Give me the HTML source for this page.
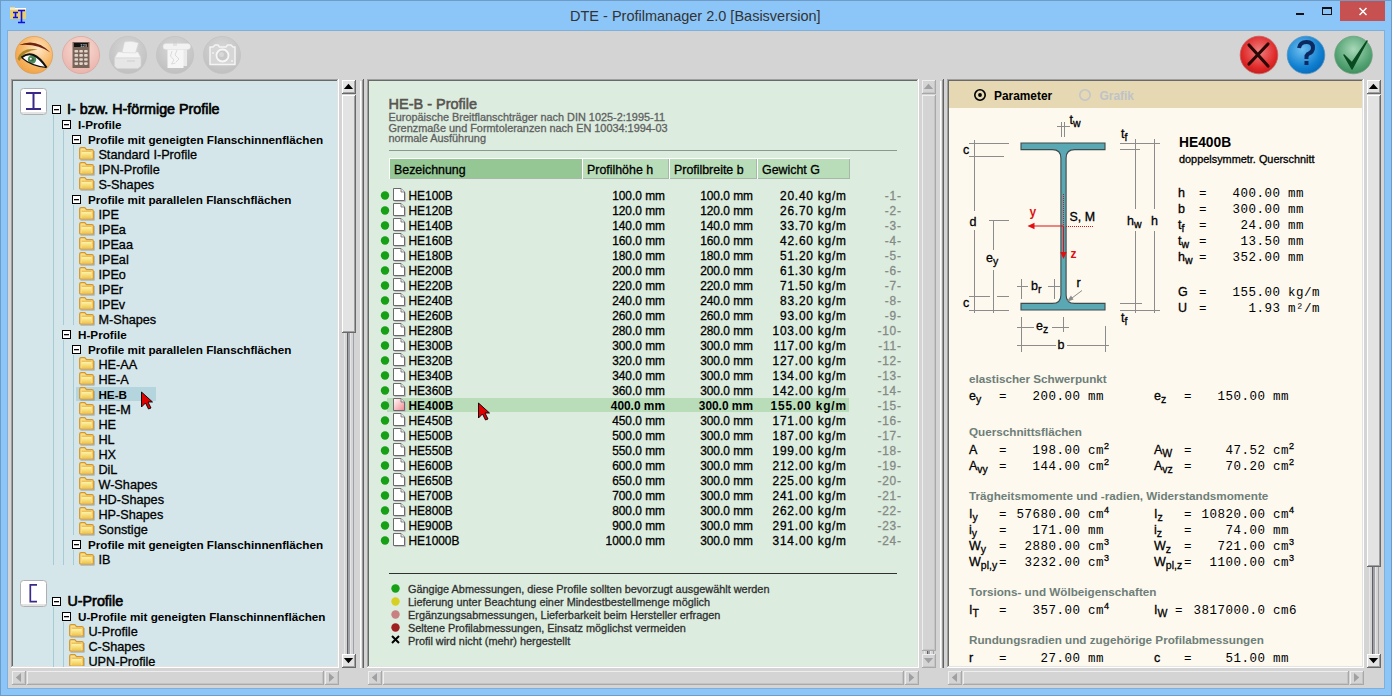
<!DOCTYPE html>
<html><head><meta charset="utf-8"><style>
html,body{margin:0;padding:0;width:1392px;height:696px;overflow:hidden;position:relative;font-family:"Liberation Sans",sans-serif;}
svg text{white-space:pre;}
</style></head><body>
<div style="position:absolute;left:0px;top:0px;width:1392px;height:696px;background:#8CC6F8;"></div><div style="position:absolute;left:0px;top:0px;width:1392px;height:1px;background:#6E9CC6;"></div><div style="position:absolute;left:0px;top:0px;width:1px;height:696px;background:#6E9CC6;"></div><div style="position:absolute;left:1391px;top:0px;width:1px;height:696px;background:#6E9CC6;"></div><div style="position:absolute;left:0px;top:695px;width:1392px;height:1px;background:#6E9CC6;"></div><div style="position:absolute;left:7px;top:30px;width:1378px;height:659px;background:#7FB0DC;"></div><div style="position:absolute;left:8px;top:31px;width:1376px;height:657px;background:#D4D4D4;"></div><div style="position:absolute;left:1340px;top:1px;width:45px;height:20px;background:#C75050;"></div><div style="position:absolute;left:1296px;top:13px;width:8px;height:2px;background:#111;"></div><div style="position:absolute;left:11px;top:79px;width:328px;height:589px;background:#fff;"></div><div style="position:absolute;left:11px;top:79px;width:327px;height:588px;background:#A0A0A0;"></div><div style="position:absolute;left:12px;top:80px;width:326px;height:587px;background:#E3E3E3;"></div><div style="position:absolute;left:12px;top:80px;width:325px;height:586px;background:#696969;"></div><div style="position:absolute;left:13px;top:81px;width:324px;height:585px;background:#D4E6EA;"></div><div style="position:absolute;left:367px;top:79px;width:552px;height:589px;background:#fff;"></div><div style="position:absolute;left:367px;top:79px;width:551px;height:588px;background:#A0A0A0;"></div><div style="position:absolute;left:368px;top:80px;width:550px;height:587px;background:#E3E3E3;"></div><div style="position:absolute;left:368px;top:80px;width:549px;height:586px;background:#696969;"></div><div style="position:absolute;left:369px;top:81px;width:548px;height:585px;background:#DCEDDF;"></div><div style="position:absolute;left:947px;top:79px;width:417px;height:589px;background:#fff;"></div><div style="position:absolute;left:947px;top:79px;width:416px;height:588px;background:#A0A0A0;"></div><div style="position:absolute;left:948px;top:80px;width:415px;height:587px;background:#E3E3E3;"></div><div style="position:absolute;left:948px;top:80px;width:414px;height:586px;background:#696969;"></div><div style="position:absolute;left:949px;top:81px;width:413px;height:585px;background:#FDF9EF;"></div><div style="position:absolute;left:949px;top:81px;width:413px;height:27px;background:#E5D8B2;"></div><div style="position:absolute;left:360px;top:81px;width:4px;height:587px;background:#fff;"></div><div style="position:absolute;left:361px;top:81px;width:3px;height:587px;background:#E3E3E3;"></div><div style="position:absolute;left:362px;top:80px;width:1px;height:588px;background:#9A9A9A;"></div><div style="position:absolute;left:363px;top:79px;width:1px;height:589px;background:#606060;"></div><div style="position:absolute;left:940px;top:81px;width:4px;height:587px;background:#fff;"></div><div style="position:absolute;left:941px;top:81px;width:3px;height:587px;background:#E3E3E3;"></div><div style="position:absolute;left:942px;top:80px;width:1px;height:588px;background:#9A9A9A;"></div><div style="position:absolute;left:943px;top:79px;width:1px;height:589px;background:#606060;"></div><div style="position:absolute;left:342px;top:95px;width:14px;height:559px;background:#D4D4D4;"></div><div style="position:absolute;left:344px;top:95px;width:1px;height:559px;background:#E6E6E6;"></div><div style="position:absolute;left:347px;top:95px;width:1px;height:559px;background:#606060;"></div><div style="position:absolute;left:348px;top:95px;width:2px;height:559px;background:#A0A0A8;"></div><div style="position:absolute;left:350px;top:95px;width:1px;height:559px;background:#E6E6E6;"></div><div style="position:absolute;left:353px;top:95px;width:1px;height:559px;background:#A0A0A8;"></div><div style="position:absolute;left:342px;top:80px;width:14px;height:14px;background:#696969;"></div><div style="position:absolute;left:342px;top:80px;width:13px;height:13px;background:#fff;"></div><div style="position:absolute;left:343px;top:81px;width:12px;height:12px;background:#A0A0A0;"></div><div style="position:absolute;left:343px;top:81px;width:11px;height:11px;background:#E3E3E3;"></div><div style="position:absolute;left:342px;top:95px;width:14px;height:238px;background:#696969;"></div><div style="position:absolute;left:342px;top:95px;width:13px;height:237px;background:#fff;"></div><div style="position:absolute;left:343px;top:96px;width:12px;height:236px;background:#A0A0A0;"></div><div style="position:absolute;left:343px;top:96px;width:11px;height:235px;background:#E3E3E3;"></div><div style="position:absolute;left:342px;top:654px;width:14px;height:14px;background:#696969;"></div><div style="position:absolute;left:342px;top:654px;width:13px;height:13px;background:#fff;"></div><div style="position:absolute;left:343px;top:655px;width:12px;height:12px;background:#A0A0A0;"></div><div style="position:absolute;left:343px;top:655px;width:11px;height:11px;background:#E3E3E3;"></div><div style="position:absolute;left:922px;top:95px;width:14px;height:559px;background:#D4D4D4;"></div><div style="position:absolute;left:924px;top:95px;width:1px;height:559px;background:#E6E6E6;"></div><div style="position:absolute;left:927px;top:95px;width:1px;height:559px;background:#606060;"></div><div style="position:absolute;left:928px;top:95px;width:2px;height:559px;background:#A0A0A8;"></div><div style="position:absolute;left:930px;top:95px;width:1px;height:559px;background:#E6E6E6;"></div><div style="position:absolute;left:933px;top:95px;width:1px;height:559px;background:#A0A0A8;"></div><div style="position:absolute;left:922px;top:80px;width:14px;height:14px;background:#A8A8A8;"></div><div style="position:absolute;left:922px;top:80px;width:13px;height:13px;background:#EEEEEE;"></div><div style="position:absolute;left:923px;top:81px;width:12px;height:12px;background:#C4C4C4;"></div><div style="position:absolute;left:923px;top:81px;width:11px;height:11px;background:#D4D4D4;"></div><div style="position:absolute;left:922px;top:95px;width:14px;height:556px;background:#A8A8A8;"></div><div style="position:absolute;left:922px;top:95px;width:13px;height:555px;background:#EEEEEE;"></div><div style="position:absolute;left:923px;top:96px;width:12px;height:554px;background:#C4C4C4;"></div><div style="position:absolute;left:923px;top:96px;width:11px;height:553px;background:#D4D4D4;"></div><div style="position:absolute;left:922px;top:654px;width:14px;height:14px;background:#A8A8A8;"></div><div style="position:absolute;left:922px;top:654px;width:13px;height:13px;background:#EEEEEE;"></div><div style="position:absolute;left:923px;top:655px;width:12px;height:12px;background:#C4C4C4;"></div><div style="position:absolute;left:923px;top:655px;width:11px;height:11px;background:#D4D4D4;"></div><div style="position:absolute;left:1367px;top:95px;width:14px;height:559px;background:#D4D4D4;"></div><div style="position:absolute;left:1369px;top:95px;width:1px;height:559px;background:#E6E6E6;"></div><div style="position:absolute;left:1372px;top:95px;width:1px;height:559px;background:#606060;"></div><div style="position:absolute;left:1373px;top:95px;width:2px;height:559px;background:#A0A0A8;"></div><div style="position:absolute;left:1375px;top:95px;width:1px;height:559px;background:#E6E6E6;"></div><div style="position:absolute;left:1378px;top:95px;width:1px;height:559px;background:#A0A0A8;"></div><div style="position:absolute;left:1367px;top:80px;width:14px;height:14px;background:#696969;"></div><div style="position:absolute;left:1367px;top:80px;width:13px;height:13px;background:#fff;"></div><div style="position:absolute;left:1368px;top:81px;width:12px;height:12px;background:#A0A0A0;"></div><div style="position:absolute;left:1368px;top:81px;width:11px;height:11px;background:#E3E3E3;"></div><div style="position:absolute;left:1367px;top:95px;width:14px;height:472px;background:#696969;"></div><div style="position:absolute;left:1367px;top:95px;width:13px;height:471px;background:#fff;"></div><div style="position:absolute;left:1368px;top:96px;width:12px;height:470px;background:#A0A0A0;"></div><div style="position:absolute;left:1368px;top:96px;width:11px;height:469px;background:#E3E3E3;"></div><div style="position:absolute;left:1367px;top:654px;width:14px;height:14px;background:#696969;"></div><div style="position:absolute;left:1367px;top:654px;width:13px;height:13px;background:#fff;"></div><div style="position:absolute;left:1368px;top:655px;width:12px;height:12px;background:#A0A0A0;"></div><div style="position:absolute;left:1368px;top:655px;width:11px;height:11px;background:#E3E3E3;"></div><div style="position:absolute;left:12px;top:671px;width:14px;height:14px;background:#A8A8A8;"></div><div style="position:absolute;left:12px;top:671px;width:13px;height:13px;background:#EEEEEE;"></div><div style="position:absolute;left:13px;top:672px;width:12px;height:12px;background:#C4C4C4;"></div><div style="position:absolute;left:13px;top:672px;width:11px;height:11px;background:#D4D4D4;"></div><div style="position:absolute;left:27px;top:671px;width:297px;height:14px;background:#A8A8A8;"></div><div style="position:absolute;left:27px;top:671px;width:296px;height:13px;background:#EEEEEE;"></div><div style="position:absolute;left:28px;top:672px;width:295px;height:12px;background:#C4C4C4;"></div><div style="position:absolute;left:28px;top:672px;width:294px;height:11px;background:#D4D4D4;"></div><div style="position:absolute;left:325px;top:671px;width:14px;height:14px;background:#A8A8A8;"></div><div style="position:absolute;left:325px;top:671px;width:13px;height:13px;background:#EEEEEE;"></div><div style="position:absolute;left:326px;top:672px;width:12px;height:12px;background:#C4C4C4;"></div><div style="position:absolute;left:326px;top:672px;width:11px;height:11px;background:#D4D4D4;"></div><div style="position:absolute;left:368px;top:671px;width:14px;height:14px;background:#A8A8A8;"></div><div style="position:absolute;left:368px;top:671px;width:13px;height:13px;background:#EEEEEE;"></div><div style="position:absolute;left:369px;top:672px;width:12px;height:12px;background:#C4C4C4;"></div><div style="position:absolute;left:369px;top:672px;width:11px;height:11px;background:#D4D4D4;"></div><div style="position:absolute;left:383px;top:671px;width:521px;height:14px;background:#A8A8A8;"></div><div style="position:absolute;left:383px;top:671px;width:520px;height:13px;background:#EEEEEE;"></div><div style="position:absolute;left:384px;top:672px;width:519px;height:12px;background:#C4C4C4;"></div><div style="position:absolute;left:384px;top:672px;width:518px;height:11px;background:#D4D4D4;"></div><div style="position:absolute;left:905px;top:671px;width:14px;height:14px;background:#A8A8A8;"></div><div style="position:absolute;left:905px;top:671px;width:13px;height:13px;background:#EEEEEE;"></div><div style="position:absolute;left:906px;top:672px;width:12px;height:12px;background:#C4C4C4;"></div><div style="position:absolute;left:906px;top:672px;width:11px;height:11px;background:#D4D4D4;"></div><div style="position:absolute;left:948px;top:671px;width:14px;height:14px;background:#A8A8A8;"></div><div style="position:absolute;left:948px;top:671px;width:13px;height:13px;background:#EEEEEE;"></div><div style="position:absolute;left:949px;top:672px;width:12px;height:12px;background:#C4C4C4;"></div><div style="position:absolute;left:949px;top:672px;width:11px;height:11px;background:#D4D4D4;"></div><div style="position:absolute;left:963px;top:671px;width:386px;height:14px;background:#A8A8A8;"></div><div style="position:absolute;left:963px;top:671px;width:385px;height:13px;background:#EEEEEE;"></div><div style="position:absolute;left:964px;top:672px;width:384px;height:12px;background:#C4C4C4;"></div><div style="position:absolute;left:964px;top:672px;width:383px;height:11px;background:#D4D4D4;"></div><div style="position:absolute;left:1350px;top:671px;width:14px;height:14px;background:#A8A8A8;"></div><div style="position:absolute;left:1350px;top:671px;width:13px;height:13px;background:#EEEEEE;"></div><div style="position:absolute;left:1351px;top:672px;width:12px;height:12px;background:#C4C4C4;"></div><div style="position:absolute;left:1351px;top:672px;width:11px;height:11px;background:#D4D4D4;"></div><div style="position:absolute;left:53px;top:115px;width:1px;height:450px;background:#A4CCD6;"></div><div style="position:absolute;left:63px;top:130px;width:1px;height:195px;background:#A4CCD6;"></div><div style="position:absolute;left:63px;top:340px;width:1px;height:225px;background:#A4CCD6;"></div><div style="position:absolute;left:73px;top:145px;width:1px;height:45px;background:#A4CCD6;"></div><div style="position:absolute;left:73px;top:205px;width:1px;height:120px;background:#A4CCD6;"></div><div style="position:absolute;left:73px;top:355px;width:1px;height:180px;background:#A4CCD6;"></div><div style="position:absolute;left:73px;top:550px;width:1px;height:15px;background:#A4CCD6;"></div><div style="position:absolute;left:76px;top:387px;width:80px;height:14px;background:#B4D4DE;"></div><div style="position:absolute;left:53px;top:607px;width:1px;height:60px;background:#A4CCD6;"></div><div style="position:absolute;left:63px;top:622px;width:1px;height:45px;background:#A4CCD6;"></div><div style="position:absolute;left:389px;top:150px;width:508px;height:1px;background:#8A9A8C;"></div><div style="position:absolute;left:389px;top:158px;width:193px;height:21px;background:#fff;"></div><div style="position:absolute;left:390px;top:159px;width:192px;height:20px;background:#A8B8A8;"></div><div style="position:absolute;left:390px;top:159px;width:191px;height:19px;background:#94C794;"></div><div style="position:absolute;left:582px;top:158px;width:87px;height:21px;background:#fff;"></div><div style="position:absolute;left:583px;top:159px;width:86px;height:20px;background:#A8B8A8;"></div><div style="position:absolute;left:583px;top:159px;width:85px;height:19px;background:#B8DDB8;"></div><div style="position:absolute;left:669px;top:158px;width:88px;height:21px;background:#fff;"></div><div style="position:absolute;left:670px;top:159px;width:87px;height:20px;background:#A8B8A8;"></div><div style="position:absolute;left:670px;top:159px;width:86px;height:19px;background:#B8DDB8;"></div><div style="position:absolute;left:757px;top:158px;width:93px;height:21px;background:#fff;"></div><div style="position:absolute;left:758px;top:159px;width:92px;height:20px;background:#A8B8A8;"></div><div style="position:absolute;left:758px;top:159px;width:91px;height:19px;background:#B8DDB8;"></div><div style="position:absolute;left:387px;top:398px;width:462px;height:14px;background:#B9DCB9;"></div><div style="position:absolute;left:389px;top:573px;width:508px;height:1px;background:#303030;"></div>
<svg width="1392" height="696" style="position:absolute;left:0;top:0">
<text x="570" y="21" font-size="14.5" font-weight="normal" fill="#333" text-anchor="start" font-family="Liberation Sans" >DTE - Profilmanager 2.0 [Basisversion]</text>
<path d="M1359.5 8 L1366.5 15 M1366.5 8 L1359.5 15" stroke="#fff" stroke-width="1.5"/>
<rect x="1322.5" y="7.5" width="9" height="7" fill="none" stroke="#111" stroke-width="1"/><rect x="1322" y="7" width="10" height="2" fill="#111"/>
<rect x="10" y="8" width="16" height="11" fill="#E8D070"/><rect x="10" y="8" width="16" height="1.5" fill="#fff"/><rect x="10" y="7" width="5" height="1.5" fill="#F0D890"/>
<path d="M13 12.5h5 M15.5 12.5v5 M13 17.5h5 M18 10.5h7 M21.5 10.5v12 M18 22.5h7" stroke="#1010E0" stroke-width="1.6" fill="none"/>
<path d="M343.9 89 L348.5 83.8 L353.1 89Z" fill="#000"/>
<path d="M343.9 658 L348.5 663.2 L353.1 658Z" fill="#000"/>
<path d="M923.9 89 L928.5 83.8 L933.1 89Z" fill="#A0A0A4"/>
<path d="M923.9 658 L928.5 663.2 L933.1 658Z" fill="#A0A0A4"/>
<path d="M1368.9 89 L1373.5 83.8 L1378.1 89Z" fill="#000"/>
<path d="M1368.9 658 L1373.5 663.2 L1378.1 658Z" fill="#000"/>
<path d="M21 672.9 L15.8 677.5 L21 682.1Z" fill="#A0A0A4"/>
<path d="M329 672.9 L334.2 677.5 L329 682.1Z" fill="#A0A0A4"/>
<path d="M377 672.9 L371.8 677.5 L377 682.1Z" fill="#A0A0A4"/>
<path d="M909 672.9 L914.2 677.5 L909 682.1Z" fill="#A0A0A4"/>
<path d="M957 672.9 L951.8 677.5 L957 682.1Z" fill="#A0A0A4"/>
<path d="M1354 672.9 L1359.2 677.5 L1354 682.1Z" fill="#A0A0A4"/>
<defs>
<radialGradient id="gOr" cx="0.6" cy="0.35" r="0.7"><stop offset="0" stop-color="#FFE8C8"/><stop offset="0.6" stop-color="#F8B868"/><stop offset="1" stop-color="#F0A040"/></radialGradient>
<radialGradient id="gPk" cx="0.5" cy="0.35" r="0.7"><stop offset="0" stop-color="#FBE0D8"/><stop offset="1" stop-color="#E8B0A8"/></radialGradient>
<radialGradient id="gGr" cx="0.5" cy="0.35" r="0.7"><stop offset="0" stop-color="#D8D8D8"/><stop offset="1" stop-color="#BEBEBE"/></radialGradient>
<radialGradient id="gRd" cx="0.5" cy="0.4" r="0.65"><stop offset="0" stop-color="#F08080"/><stop offset="0.7" stop-color="#E02828"/><stop offset="1" stop-color="#C01818"/></radialGradient>
<radialGradient id="gBl" cx="0.4" cy="0.35" r="0.7"><stop offset="0" stop-color="#70C0F0"/><stop offset="0.7" stop-color="#1080D0"/><stop offset="1" stop-color="#0868B8"/></radialGradient>
<radialGradient id="gGn" cx="0.5" cy="0.35" r="0.7"><stop offset="0" stop-color="#A8D8B8"/><stop offset="0.7" stop-color="#50A070"/><stop offset="1" stop-color="#388858"/></radialGradient>
<linearGradient id="gFold" x1="0" y1="0" x2="0" y2="1"><stop offset="0" stop-color="#FFF6B0"/><stop offset="1" stop-color="#F0C850"/></linearGradient>
<linearGradient id="gPink" x1="0" y1="0" x2="1" y2="1"><stop offset="0" stop-color="#FFFFFF"/><stop offset="1" stop-color="#F08890"/></linearGradient>
</defs>
<circle cx="34" cy="55" r="18.6" fill="url(#gOr)" stroke="#D8A060" stroke-width="0.8"/>
<path d="M19 45 Q36 37.5 50.5 52.5 Q37 43 19 45Z" fill="#6E2410"/>
<path d="M17.5 59 Q21 47 38 49.5 Q24 50 19.5 61Z" fill="#A88628"/>
<path d="M21.5 57.5 Q33 48 46.5 67.5 Q31 66 21.5 57.5Z" fill="#fff"/>
<circle cx="32" cy="59.5" r="4.2" fill="#4E8E5C"/><circle cx="32" cy="59.5" r="2" fill="#3A6E46"/><circle cx="30.8" cy="58.8" r="1" fill="#fff"/>
<path d="M21.5 57.5 Q33 47.5 46.5 67.5" fill="none" stroke="#111" stroke-width="2"/><path d="M21.5 57.5 Q31 66 46.5 67.5" fill="none" stroke="#111" stroke-width="1.1"/>
<circle cx="81" cy="55" r="18.6" fill="url(#gPk)" stroke="#D8A8A0" stroke-width="0.8"/>
<rect x="72.5" y="42" width="17" height="26" fill="#7A6458"/><rect x="74" y="43" width="14" height="4" fill="#111"/><text x="87" y="46.6" font-size="4" fill="#fff" text-anchor="end" font-family="Liberation Sans">123</text>
<rect x="74.5" y="50.0" width="3.6" height="2.6" rx="0.8" fill="#E0D4CC"/>
<rect x="79.3" y="50.0" width="3.6" height="2.6" rx="0.8" fill="#E0D4CC"/>
<rect x="84.1" y="50.0" width="3.6" height="2.6" rx="0.8" fill="#E0D4CC"/>
<rect x="74.5" y="54.1" width="3.6" height="2.6" rx="0.8" fill="#E0D4CC"/>
<rect x="79.3" y="54.1" width="3.6" height="2.6" rx="0.8" fill="#E0D4CC"/>
<rect x="84.1" y="54.1" width="3.6" height="2.6" rx="0.8" fill="#E0D4CC"/>
<rect x="74.5" y="58.2" width="3.6" height="2.6" rx="0.8" fill="#E0D4CC"/>
<rect x="79.3" y="58.2" width="3.6" height="2.6" rx="0.8" fill="#E0D4CC"/>
<rect x="84.1" y="58.2" width="3.6" height="2.6" rx="0.8" fill="#E0D4CC"/>
<rect x="74.5" y="62.3" width="3.6" height="2.6" rx="0.8" fill="#E0D4CC"/>
<rect x="79.3" y="62.3" width="3.6" height="2.6" rx="0.8" fill="#E0D4CC"/>
<rect x="84.1" y="62.3" width="3.6" height="2.6" rx="0.8" fill="#E0D4CC"/>
<circle cx="128" cy="55" r="18.6" fill="url(#gGr)" stroke="#C4C4C4" stroke-width="0.8"/>
<path d="M114.5 58 L118 52 H138 L141 58Z" fill="#F4F4F4" stroke="#DADADA" stroke-width="0.6"/><path d="M114.5 58 H141 V66 L138 68.5 H117 L114.5 66Z" fill="#E6E6E6" stroke="#D4D4D4" stroke-width="0.6"/><path d="M122 52.5 L124.5 42 Q131 40 138.5 43 L135.5 53Z" fill="#F2F2F2" stroke="#D6D6D6" stroke-width="0.6"/><path d="M127 61 h8" stroke="#C8C8C8" stroke-width="0.8"/>
<circle cx="175" cy="55" r="18.6" fill="url(#gGr)" stroke="#C4C4C4" stroke-width="0.8"/>
<rect x="170" y="46" width="17" height="20" fill="#EAEAEA"/><path d="M167.5 46 H183.5 V68 H167.5Z" fill="#F6F6F6"/><rect x="163" y="43.5" width="27.5" height="6" rx="3" fill="#F2F2F2" stroke="#DCDCDC" stroke-width="0.5"/><path d="M174 40 V46 M176 40 V46" stroke="#C8C8C8" stroke-width="0.7"/><path d="M172 51 L170.5 56 L174 60 L171.5 64 L175.5 63 M177 50 L175 55 L179 59 L176 62" stroke="#D0D0D0" fill="none" stroke-width="0.7"/>
<circle cx="222" cy="55" r="18.6" fill="url(#gGr)" stroke="#C4C4C4" stroke-width="0.8"/>
<path d="M210 47 H213 L215 45 H218 L219.5 47 H226 L227.5 45 H231 L233 47 H235 V64.5 H210Z" fill="#D6D6D6" stroke="#F4F4F4" stroke-width="1.5" stroke-linejoin="round"/><circle cx="222.5" cy="55.5" r="6" fill="#C8C8C8" stroke="#F6F6F6" stroke-width="1.8"/><circle cx="221.5" cy="54.5" r="2.5" fill="#D8D8D8"/><circle cx="213" cy="53" r="1" fill="#F0F0F0"/><circle cx="232" cy="61" r="1" fill="#F0F0F0"/>
<circle cx="1259" cy="55" r="18.8" fill="url(#gRd)" stroke="#C06060" stroke-width="0.8"/>
<path d="M1249 45 L1268 66 M1268 44 L1249 64" stroke="#2A0808" stroke-width="3.2" stroke-linecap="round"/>
<circle cx="1306" cy="55" r="18.8" fill="url(#gBl)" stroke="#5090C0" stroke-width="0.8"/>
<path d="M1299 48 Q1300 42 1306.5 42 Q1313 42 1313 48 Q1313 52 1308 54 L1306.5 56 V59" stroke="#0C2A60" stroke-width="4" fill="none"/><rect x="1304.5" y="61" width="4" height="4" fill="#0C2A60"/>
<circle cx="1353.5" cy="55" r="18.8" fill="url(#gGn)" stroke="#70A080" stroke-width="0.8"/>
<path d="M1344 55 L1352 69 L1367 41 L1352 63Z" fill="#0A4A20" stroke="#0A4A20" stroke-width="1.5" stroke-linejoin="round"/>
<defs><clipPath id="cL"><rect x="13" y="81" width="325" height="585"/></clipPath><clipPath id="cM"><rect x="369" y="81" width="549" height="585"/></clipPath><clipPath id="cR"><rect x="949" y="81" width="413" height="585"/></clipPath></defs>
<g clip-path="url(#cL)">
<rect x="20.5" y="88.5" width="26" height="26" rx="3" fill="#fff" stroke="#B0B0B0" stroke-width="1"/>
<rect x="21" y="112" width="26" height="2" fill="#C8C8C8" opacity="0.5"/>
<path d="M26 93 H41 M33.5 93 V109 M26 109 H41" stroke="#3A2A88" stroke-width="2" fill="none"/>
<rect x="52.5" y="105.5" width="8" height="8" fill="#fff" stroke="#000" stroke-width="1"/><rect x="54" y="109" width="5" height="1.3" fill="#000"/>
<text x="67" y="114" font-size="14.3" font-weight="normal" fill="#000" text-anchor="start" font-family="Liberation Sans" stroke="#000" stroke-width="0.65" >I- bzw. H-förmige Profile</text>
<rect x="62.5" y="120.5" width="8" height="8" fill="#fff" stroke="#000" stroke-width="1"/><rect x="64.0" y="124" width="5" height="1.3" fill="#000"/>
<text x="78.0" y="129" font-size="11.7" font-weight="bold" fill="#000" text-anchor="start" font-family="Liberation Sans" >I-Profile</text>
<rect x="72.5" y="135.5" width="8" height="8" fill="#fff" stroke="#000" stroke-width="1"/><rect x="74.0" y="139" width="5" height="1.3" fill="#000"/>
<text x="88.0" y="144" font-size="11.7" font-weight="bold" fill="#000" text-anchor="start" font-family="Liberation Sans" >Profile mit geneigten Flanschinnenflächen</text>
<g transform="translate(79.0,147)"><path d="M1.5 13 H15 V4" stroke="#6A5A40" stroke-width="1.1" fill="none" opacity="0.5"/><path d="M0.7 2 Q0.7 0.7 2 0.7 H5.8 L7.5 2.6 H13 Q14.3 2.6 14.3 4 V11 Q14.3 12 13.3 12 H1.7 Q0.7 12 0.7 11Z" fill="#FBE08A" stroke="#D4962A" stroke-width="1.2"/><rect x="2.6" y="4.6" width="9.8" height="6.4" fill="url(#gFold)"/><path d="M2.6 4.2 H12.6" stroke="#E3A83A" stroke-width="0.9"/></g>
<text x="98.4" y="159" font-size="12.7" font-weight="normal" fill="#000" text-anchor="start" font-family="Liberation Sans" stroke="#000" stroke-width="0.3" >Standard I-Profile</text>
<g transform="translate(79.0,162)"><path d="M1.5 13 H15 V4" stroke="#6A5A40" stroke-width="1.1" fill="none" opacity="0.5"/><path d="M0.7 2 Q0.7 0.7 2 0.7 H5.8 L7.5 2.6 H13 Q14.3 2.6 14.3 4 V11 Q14.3 12 13.3 12 H1.7 Q0.7 12 0.7 11Z" fill="#FBE08A" stroke="#D4962A" stroke-width="1.2"/><rect x="2.6" y="4.6" width="9.8" height="6.4" fill="url(#gFold)"/><path d="M2.6 4.2 H12.6" stroke="#E3A83A" stroke-width="0.9"/></g>
<text x="98.4" y="174" font-size="12.7" font-weight="normal" fill="#000" text-anchor="start" font-family="Liberation Sans" stroke="#000" stroke-width="0.3" >IPN-Profile</text>
<g transform="translate(79.0,177)"><path d="M1.5 13 H15 V4" stroke="#6A5A40" stroke-width="1.1" fill="none" opacity="0.5"/><path d="M0.7 2 Q0.7 0.7 2 0.7 H5.8 L7.5 2.6 H13 Q14.3 2.6 14.3 4 V11 Q14.3 12 13.3 12 H1.7 Q0.7 12 0.7 11Z" fill="#FBE08A" stroke="#D4962A" stroke-width="1.2"/><rect x="2.6" y="4.6" width="9.8" height="6.4" fill="url(#gFold)"/><path d="M2.6 4.2 H12.6" stroke="#E3A83A" stroke-width="0.9"/></g>
<text x="98.4" y="189" font-size="12.7" font-weight="normal" fill="#000" text-anchor="start" font-family="Liberation Sans" stroke="#000" stroke-width="0.3" >S-Shapes</text>
<rect x="72.5" y="195.5" width="8" height="8" fill="#fff" stroke="#000" stroke-width="1"/><rect x="74.0" y="199" width="5" height="1.3" fill="#000"/>
<text x="88.0" y="204" font-size="11.7" font-weight="bold" fill="#000" text-anchor="start" font-family="Liberation Sans" >Profile mit parallelen Flanschflächen</text>
<g transform="translate(79.0,207)"><path d="M1.5 13 H15 V4" stroke="#6A5A40" stroke-width="1.1" fill="none" opacity="0.5"/><path d="M0.7 2 Q0.7 0.7 2 0.7 H5.8 L7.5 2.6 H13 Q14.3 2.6 14.3 4 V11 Q14.3 12 13.3 12 H1.7 Q0.7 12 0.7 11Z" fill="#FBE08A" stroke="#D4962A" stroke-width="1.2"/><rect x="2.6" y="4.6" width="9.8" height="6.4" fill="url(#gFold)"/><path d="M2.6 4.2 H12.6" stroke="#E3A83A" stroke-width="0.9"/></g>
<text x="98.4" y="219" font-size="12.7" font-weight="normal" fill="#000" text-anchor="start" font-family="Liberation Sans" stroke="#000" stroke-width="0.3" >IPE</text>
<g transform="translate(79.0,222)"><path d="M1.5 13 H15 V4" stroke="#6A5A40" stroke-width="1.1" fill="none" opacity="0.5"/><path d="M0.7 2 Q0.7 0.7 2 0.7 H5.8 L7.5 2.6 H13 Q14.3 2.6 14.3 4 V11 Q14.3 12 13.3 12 H1.7 Q0.7 12 0.7 11Z" fill="#FBE08A" stroke="#D4962A" stroke-width="1.2"/><rect x="2.6" y="4.6" width="9.8" height="6.4" fill="url(#gFold)"/><path d="M2.6 4.2 H12.6" stroke="#E3A83A" stroke-width="0.9"/></g>
<text x="98.4" y="234" font-size="12.7" font-weight="normal" fill="#000" text-anchor="start" font-family="Liberation Sans" stroke="#000" stroke-width="0.3" >IPEa</text>
<g transform="translate(79.0,237)"><path d="M1.5 13 H15 V4" stroke="#6A5A40" stroke-width="1.1" fill="none" opacity="0.5"/><path d="M0.7 2 Q0.7 0.7 2 0.7 H5.8 L7.5 2.6 H13 Q14.3 2.6 14.3 4 V11 Q14.3 12 13.3 12 H1.7 Q0.7 12 0.7 11Z" fill="#FBE08A" stroke="#D4962A" stroke-width="1.2"/><rect x="2.6" y="4.6" width="9.8" height="6.4" fill="url(#gFold)"/><path d="M2.6 4.2 H12.6" stroke="#E3A83A" stroke-width="0.9"/></g>
<text x="98.4" y="249" font-size="12.7" font-weight="normal" fill="#000" text-anchor="start" font-family="Liberation Sans" stroke="#000" stroke-width="0.3" >IPEaa</text>
<g transform="translate(79.0,252)"><path d="M1.5 13 H15 V4" stroke="#6A5A40" stroke-width="1.1" fill="none" opacity="0.5"/><path d="M0.7 2 Q0.7 0.7 2 0.7 H5.8 L7.5 2.6 H13 Q14.3 2.6 14.3 4 V11 Q14.3 12 13.3 12 H1.7 Q0.7 12 0.7 11Z" fill="#FBE08A" stroke="#D4962A" stroke-width="1.2"/><rect x="2.6" y="4.6" width="9.8" height="6.4" fill="url(#gFold)"/><path d="M2.6 4.2 H12.6" stroke="#E3A83A" stroke-width="0.9"/></g>
<text x="98.4" y="264" font-size="12.7" font-weight="normal" fill="#000" text-anchor="start" font-family="Liberation Sans" stroke="#000" stroke-width="0.3" >IPEal</text>
<g transform="translate(79.0,267)"><path d="M1.5 13 H15 V4" stroke="#6A5A40" stroke-width="1.1" fill="none" opacity="0.5"/><path d="M0.7 2 Q0.7 0.7 2 0.7 H5.8 L7.5 2.6 H13 Q14.3 2.6 14.3 4 V11 Q14.3 12 13.3 12 H1.7 Q0.7 12 0.7 11Z" fill="#FBE08A" stroke="#D4962A" stroke-width="1.2"/><rect x="2.6" y="4.6" width="9.8" height="6.4" fill="url(#gFold)"/><path d="M2.6 4.2 H12.6" stroke="#E3A83A" stroke-width="0.9"/></g>
<text x="98.4" y="279" font-size="12.7" font-weight="normal" fill="#000" text-anchor="start" font-family="Liberation Sans" stroke="#000" stroke-width="0.3" >IPEo</text>
<g transform="translate(79.0,282)"><path d="M1.5 13 H15 V4" stroke="#6A5A40" stroke-width="1.1" fill="none" opacity="0.5"/><path d="M0.7 2 Q0.7 0.7 2 0.7 H5.8 L7.5 2.6 H13 Q14.3 2.6 14.3 4 V11 Q14.3 12 13.3 12 H1.7 Q0.7 12 0.7 11Z" fill="#FBE08A" stroke="#D4962A" stroke-width="1.2"/><rect x="2.6" y="4.6" width="9.8" height="6.4" fill="url(#gFold)"/><path d="M2.6 4.2 H12.6" stroke="#E3A83A" stroke-width="0.9"/></g>
<text x="98.4" y="294" font-size="12.7" font-weight="normal" fill="#000" text-anchor="start" font-family="Liberation Sans" stroke="#000" stroke-width="0.3" >IPEr</text>
<g transform="translate(79.0,297)"><path d="M1.5 13 H15 V4" stroke="#6A5A40" stroke-width="1.1" fill="none" opacity="0.5"/><path d="M0.7 2 Q0.7 0.7 2 0.7 H5.8 L7.5 2.6 H13 Q14.3 2.6 14.3 4 V11 Q14.3 12 13.3 12 H1.7 Q0.7 12 0.7 11Z" fill="#FBE08A" stroke="#D4962A" stroke-width="1.2"/><rect x="2.6" y="4.6" width="9.8" height="6.4" fill="url(#gFold)"/><path d="M2.6 4.2 H12.6" stroke="#E3A83A" stroke-width="0.9"/></g>
<text x="98.4" y="309" font-size="12.7" font-weight="normal" fill="#000" text-anchor="start" font-family="Liberation Sans" stroke="#000" stroke-width="0.3" >IPEv</text>
<g transform="translate(79.0,312)"><path d="M1.5 13 H15 V4" stroke="#6A5A40" stroke-width="1.1" fill="none" opacity="0.5"/><path d="M0.7 2 Q0.7 0.7 2 0.7 H5.8 L7.5 2.6 H13 Q14.3 2.6 14.3 4 V11 Q14.3 12 13.3 12 H1.7 Q0.7 12 0.7 11Z" fill="#FBE08A" stroke="#D4962A" stroke-width="1.2"/><rect x="2.6" y="4.6" width="9.8" height="6.4" fill="url(#gFold)"/><path d="M2.6 4.2 H12.6" stroke="#E3A83A" stroke-width="0.9"/></g>
<text x="98.4" y="324" font-size="12.7" font-weight="normal" fill="#000" text-anchor="start" font-family="Liberation Sans" stroke="#000" stroke-width="0.3" >M-Shapes</text>
<rect x="62.5" y="330.5" width="8" height="8" fill="#fff" stroke="#000" stroke-width="1"/><rect x="64.0" y="334" width="5" height="1.3" fill="#000"/>
<text x="78.0" y="339" font-size="11.7" font-weight="bold" fill="#000" text-anchor="start" font-family="Liberation Sans" >H-Profile</text>
<rect x="72.5" y="345.5" width="8" height="8" fill="#fff" stroke="#000" stroke-width="1"/><rect x="74.0" y="349" width="5" height="1.3" fill="#000"/>
<text x="88.0" y="354" font-size="11.7" font-weight="bold" fill="#000" text-anchor="start" font-family="Liberation Sans" >Profile mit parallelen Flanschflächen</text>
<g transform="translate(79.0,357)"><path d="M1.5 13 H15 V4" stroke="#6A5A40" stroke-width="1.1" fill="none" opacity="0.5"/><path d="M0.7 2 Q0.7 0.7 2 0.7 H5.8 L7.5 2.6 H13 Q14.3 2.6 14.3 4 V11 Q14.3 12 13.3 12 H1.7 Q0.7 12 0.7 11Z" fill="#FBE08A" stroke="#D4962A" stroke-width="1.2"/><rect x="2.6" y="4.6" width="9.8" height="6.4" fill="url(#gFold)"/><path d="M2.6 4.2 H12.6" stroke="#E3A83A" stroke-width="0.9"/></g>
<text x="98.4" y="369" font-size="12.7" font-weight="normal" fill="#000" text-anchor="start" font-family="Liberation Sans" stroke="#000" stroke-width="0.3" >HE-AA</text>
<g transform="translate(79.0,372)"><path d="M1.5 13 H15 V4" stroke="#6A5A40" stroke-width="1.1" fill="none" opacity="0.5"/><path d="M0.7 2 Q0.7 0.7 2 0.7 H5.8 L7.5 2.6 H13 Q14.3 2.6 14.3 4 V11 Q14.3 12 13.3 12 H1.7 Q0.7 12 0.7 11Z" fill="#FBE08A" stroke="#D4962A" stroke-width="1.2"/><rect x="2.6" y="4.6" width="9.8" height="6.4" fill="url(#gFold)"/><path d="M2.6 4.2 H12.6" stroke="#E3A83A" stroke-width="0.9"/></g>
<text x="98.4" y="384" font-size="12.7" font-weight="normal" fill="#000" text-anchor="start" font-family="Liberation Sans" stroke="#000" stroke-width="0.3" >HE-A</text>
<g transform="translate(79.0,387)"><path d="M1.5 13 H15 V4" stroke="#6A5A40" stroke-width="1.1" fill="none" opacity="0.5"/><path d="M0.7 2 Q0.7 0.7 2 0.7 H5.8 L7.5 2.6 H13 Q14.3 2.6 14.3 4 V11 Q14.3 12 13.3 12 H1.7 Q0.7 12 0.7 11Z" fill="#FBE08A" stroke="#D4962A" stroke-width="1.2"/><rect x="2.6" y="4.6" width="9.8" height="6.4" fill="url(#gFold)"/><path d="M2.6 4.2 H12.6" stroke="#E3A83A" stroke-width="0.9"/></g>
<text x="98.4" y="399" font-size="11.7" font-weight="bold" fill="#000" text-anchor="start" font-family="Liberation Sans" >HE-B</text>
<g transform="translate(79.0,402)"><path d="M1.5 13 H15 V4" stroke="#6A5A40" stroke-width="1.1" fill="none" opacity="0.5"/><path d="M0.7 2 Q0.7 0.7 2 0.7 H5.8 L7.5 2.6 H13 Q14.3 2.6 14.3 4 V11 Q14.3 12 13.3 12 H1.7 Q0.7 12 0.7 11Z" fill="#FBE08A" stroke="#D4962A" stroke-width="1.2"/><rect x="2.6" y="4.6" width="9.8" height="6.4" fill="url(#gFold)"/><path d="M2.6 4.2 H12.6" stroke="#E3A83A" stroke-width="0.9"/></g>
<text x="98.4" y="414" font-size="12.7" font-weight="normal" fill="#000" text-anchor="start" font-family="Liberation Sans" stroke="#000" stroke-width="0.3" >HE-M</text>
<g transform="translate(79.0,417)"><path d="M1.5 13 H15 V4" stroke="#6A5A40" stroke-width="1.1" fill="none" opacity="0.5"/><path d="M0.7 2 Q0.7 0.7 2 0.7 H5.8 L7.5 2.6 H13 Q14.3 2.6 14.3 4 V11 Q14.3 12 13.3 12 H1.7 Q0.7 12 0.7 11Z" fill="#FBE08A" stroke="#D4962A" stroke-width="1.2"/><rect x="2.6" y="4.6" width="9.8" height="6.4" fill="url(#gFold)"/><path d="M2.6 4.2 H12.6" stroke="#E3A83A" stroke-width="0.9"/></g>
<text x="98.4" y="429" font-size="12.7" font-weight="normal" fill="#000" text-anchor="start" font-family="Liberation Sans" stroke="#000" stroke-width="0.3" >HE</text>
<g transform="translate(79.0,432)"><path d="M1.5 13 H15 V4" stroke="#6A5A40" stroke-width="1.1" fill="none" opacity="0.5"/><path d="M0.7 2 Q0.7 0.7 2 0.7 H5.8 L7.5 2.6 H13 Q14.3 2.6 14.3 4 V11 Q14.3 12 13.3 12 H1.7 Q0.7 12 0.7 11Z" fill="#FBE08A" stroke="#D4962A" stroke-width="1.2"/><rect x="2.6" y="4.6" width="9.8" height="6.4" fill="url(#gFold)"/><path d="M2.6 4.2 H12.6" stroke="#E3A83A" stroke-width="0.9"/></g>
<text x="98.4" y="444" font-size="12.7" font-weight="normal" fill="#000" text-anchor="start" font-family="Liberation Sans" stroke="#000" stroke-width="0.3" >HL</text>
<g transform="translate(79.0,447)"><path d="M1.5 13 H15 V4" stroke="#6A5A40" stroke-width="1.1" fill="none" opacity="0.5"/><path d="M0.7 2 Q0.7 0.7 2 0.7 H5.8 L7.5 2.6 H13 Q14.3 2.6 14.3 4 V11 Q14.3 12 13.3 12 H1.7 Q0.7 12 0.7 11Z" fill="#FBE08A" stroke="#D4962A" stroke-width="1.2"/><rect x="2.6" y="4.6" width="9.8" height="6.4" fill="url(#gFold)"/><path d="M2.6 4.2 H12.6" stroke="#E3A83A" stroke-width="0.9"/></g>
<text x="98.4" y="459" font-size="12.7" font-weight="normal" fill="#000" text-anchor="start" font-family="Liberation Sans" stroke="#000" stroke-width="0.3" >HX</text>
<g transform="translate(79.0,462)"><path d="M1.5 13 H15 V4" stroke="#6A5A40" stroke-width="1.1" fill="none" opacity="0.5"/><path d="M0.7 2 Q0.7 0.7 2 0.7 H5.8 L7.5 2.6 H13 Q14.3 2.6 14.3 4 V11 Q14.3 12 13.3 12 H1.7 Q0.7 12 0.7 11Z" fill="#FBE08A" stroke="#D4962A" stroke-width="1.2"/><rect x="2.6" y="4.6" width="9.8" height="6.4" fill="url(#gFold)"/><path d="M2.6 4.2 H12.6" stroke="#E3A83A" stroke-width="0.9"/></g>
<text x="98.4" y="474" font-size="12.7" font-weight="normal" fill="#000" text-anchor="start" font-family="Liberation Sans" stroke="#000" stroke-width="0.3" >DiL</text>
<g transform="translate(79.0,477)"><path d="M1.5 13 H15 V4" stroke="#6A5A40" stroke-width="1.1" fill="none" opacity="0.5"/><path d="M0.7 2 Q0.7 0.7 2 0.7 H5.8 L7.5 2.6 H13 Q14.3 2.6 14.3 4 V11 Q14.3 12 13.3 12 H1.7 Q0.7 12 0.7 11Z" fill="#FBE08A" stroke="#D4962A" stroke-width="1.2"/><rect x="2.6" y="4.6" width="9.8" height="6.4" fill="url(#gFold)"/><path d="M2.6 4.2 H12.6" stroke="#E3A83A" stroke-width="0.9"/></g>
<text x="98.4" y="489" font-size="12.7" font-weight="normal" fill="#000" text-anchor="start" font-family="Liberation Sans" stroke="#000" stroke-width="0.3" >W-Shapes</text>
<g transform="translate(79.0,492)"><path d="M1.5 13 H15 V4" stroke="#6A5A40" stroke-width="1.1" fill="none" opacity="0.5"/><path d="M0.7 2 Q0.7 0.7 2 0.7 H5.8 L7.5 2.6 H13 Q14.3 2.6 14.3 4 V11 Q14.3 12 13.3 12 H1.7 Q0.7 12 0.7 11Z" fill="#FBE08A" stroke="#D4962A" stroke-width="1.2"/><rect x="2.6" y="4.6" width="9.8" height="6.4" fill="url(#gFold)"/><path d="M2.6 4.2 H12.6" stroke="#E3A83A" stroke-width="0.9"/></g>
<text x="98.4" y="504" font-size="12.7" font-weight="normal" fill="#000" text-anchor="start" font-family="Liberation Sans" stroke="#000" stroke-width="0.3" >HD-Shapes</text>
<g transform="translate(79.0,507)"><path d="M1.5 13 H15 V4" stroke="#6A5A40" stroke-width="1.1" fill="none" opacity="0.5"/><path d="M0.7 2 Q0.7 0.7 2 0.7 H5.8 L7.5 2.6 H13 Q14.3 2.6 14.3 4 V11 Q14.3 12 13.3 12 H1.7 Q0.7 12 0.7 11Z" fill="#FBE08A" stroke="#D4962A" stroke-width="1.2"/><rect x="2.6" y="4.6" width="9.8" height="6.4" fill="url(#gFold)"/><path d="M2.6 4.2 H12.6" stroke="#E3A83A" stroke-width="0.9"/></g>
<text x="98.4" y="519" font-size="12.7" font-weight="normal" fill="#000" text-anchor="start" font-family="Liberation Sans" stroke="#000" stroke-width="0.3" >HP-Shapes</text>
<g transform="translate(79.0,522)"><path d="M1.5 13 H15 V4" stroke="#6A5A40" stroke-width="1.1" fill="none" opacity="0.5"/><path d="M0.7 2 Q0.7 0.7 2 0.7 H5.8 L7.5 2.6 H13 Q14.3 2.6 14.3 4 V11 Q14.3 12 13.3 12 H1.7 Q0.7 12 0.7 11Z" fill="#FBE08A" stroke="#D4962A" stroke-width="1.2"/><rect x="2.6" y="4.6" width="9.8" height="6.4" fill="url(#gFold)"/><path d="M2.6 4.2 H12.6" stroke="#E3A83A" stroke-width="0.9"/></g>
<text x="98.4" y="534" font-size="12.7" font-weight="normal" fill="#000" text-anchor="start" font-family="Liberation Sans" stroke="#000" stroke-width="0.3" >Sonstige</text>
<rect x="72.5" y="540.5" width="8" height="8" fill="#fff" stroke="#000" stroke-width="1"/><rect x="74.0" y="544" width="5" height="1.3" fill="#000"/>
<text x="88.0" y="549" font-size="11.7" font-weight="bold" fill="#000" text-anchor="start" font-family="Liberation Sans" >Profile mit geneigten Flanschinnenflächen</text>
<g transform="translate(79.0,552)"><path d="M1.5 13 H15 V4" stroke="#6A5A40" stroke-width="1.1" fill="none" opacity="0.5"/><path d="M0.7 2 Q0.7 0.7 2 0.7 H5.8 L7.5 2.6 H13 Q14.3 2.6 14.3 4 V11 Q14.3 12 13.3 12 H1.7 Q0.7 12 0.7 11Z" fill="#FBE08A" stroke="#D4962A" stroke-width="1.2"/><rect x="2.6" y="4.6" width="9.8" height="6.4" fill="url(#gFold)"/><path d="M2.6 4.2 H12.6" stroke="#E3A83A" stroke-width="0.9"/></g>
<text x="98.4" y="564" font-size="12.7" font-weight="normal" fill="#000" text-anchor="start" font-family="Liberation Sans" stroke="#000" stroke-width="0.3" >IB</text>
<rect x="20.5" y="580.5" width="26" height="26" rx="3" fill="#fff" stroke="#B0B0B0" stroke-width="1"/>
<rect x="21" y="604" width="26" height="2" fill="#C8C8C8" opacity="0.5"/>
<path d="M37 584.8 H30.3 V601.7 H37" stroke="#3A2A88" stroke-width="1.7" fill="none"/>
<rect x="52.5" y="597.5" width="8" height="8" fill="#fff" stroke="#000" stroke-width="1"/><rect x="54" y="601" width="5" height="1.3" fill="#000"/>
<text x="67.5" y="606" font-size="14.3" font-weight="normal" fill="#000" text-anchor="start" font-family="Liberation Sans" stroke="#000" stroke-width="0.65" >U-Profile</text>
<rect x="62.5" y="612.5" width="8" height="8" fill="#fff" stroke="#000" stroke-width="1"/><rect x="64" y="616" width="5" height="1.3" fill="#000"/>
<text x="78" y="621" font-size="11.7" font-weight="bold" fill="#000" text-anchor="start" font-family="Liberation Sans" >U-Profile mit geneigten Flanschinnenflächen</text>
<g transform="translate(69,624)"><path d="M1.5 13 H15 V4" stroke="#6A5A40" stroke-width="1.1" fill="none" opacity="0.5"/><path d="M0.7 2 Q0.7 0.7 2 0.7 H5.8 L7.5 2.6 H13 Q14.3 2.6 14.3 4 V11 Q14.3 12 13.3 12 H1.7 Q0.7 12 0.7 11Z" fill="#FBE08A" stroke="#D4962A" stroke-width="1.2"/><rect x="2.6" y="4.6" width="9.8" height="6.4" fill="url(#gFold)"/><path d="M2.6 4.2 H12.6" stroke="#E3A83A" stroke-width="0.9"/></g>
<text x="88.4" y="636" font-size="12.7" font-weight="normal" fill="#000" text-anchor="start" font-family="Liberation Sans" stroke="#000" stroke-width="0.3" >U-Profile</text>
<g transform="translate(69,639)"><path d="M1.5 13 H15 V4" stroke="#6A5A40" stroke-width="1.1" fill="none" opacity="0.5"/><path d="M0.7 2 Q0.7 0.7 2 0.7 H5.8 L7.5 2.6 H13 Q14.3 2.6 14.3 4 V11 Q14.3 12 13.3 12 H1.7 Q0.7 12 0.7 11Z" fill="#FBE08A" stroke="#D4962A" stroke-width="1.2"/><rect x="2.6" y="4.6" width="9.8" height="6.4" fill="url(#gFold)"/><path d="M2.6 4.2 H12.6" stroke="#E3A83A" stroke-width="0.9"/></g>
<text x="88.4" y="651" font-size="12.7" font-weight="normal" fill="#000" text-anchor="start" font-family="Liberation Sans" stroke="#000" stroke-width="0.3" >C-Shapes</text>
<g transform="translate(69,654)"><path d="M1.5 13 H15 V4" stroke="#6A5A40" stroke-width="1.1" fill="none" opacity="0.5"/><path d="M0.7 2 Q0.7 0.7 2 0.7 H5.8 L7.5 2.6 H13 Q14.3 2.6 14.3 4 V11 Q14.3 12 13.3 12 H1.7 Q0.7 12 0.7 11Z" fill="#FBE08A" stroke="#D4962A" stroke-width="1.2"/><rect x="2.6" y="4.6" width="9.8" height="6.4" fill="url(#gFold)"/><path d="M2.6 4.2 H12.6" stroke="#E3A83A" stroke-width="0.9"/></g>
<text x="88.4" y="666" font-size="12.7" font-weight="normal" fill="#000" text-anchor="start" font-family="Liberation Sans" stroke="#000" stroke-width="0.3" >UPN-Profile</text>
<path d="M141.5 392 L141.5 407 L145.5 403 L148.5 409 L151.0 408 L148.0 402 L152.5 402Z" fill="#E00000" stroke="#000" stroke-width="0.9" stroke-linejoin="round"/>
</g>
<g clip-path="url(#cM)">
<text x="388.5" y="109" font-size="14.5" font-weight="normal" fill="#58544F" text-anchor="start" font-family="Liberation Sans" stroke="#58544F" stroke-width="0.55" >HE-B - Profile</text>
<text x="388.5" y="121.0" font-size="10.9" font-weight="normal" fill="#606060" text-anchor="start" font-family="Liberation Sans" stroke="#606060" stroke-width="0.3" >Europäische Breitflanschträger nach DIN 1025-2:1995-11</text>
<text x="388.5" y="131.5" font-size="10.9" font-weight="normal" fill="#606060" text-anchor="start" font-family="Liberation Sans" stroke="#606060" stroke-width="0.3" >Grenzmaße und Formtoleranzen nach EN 10034:1994-03</text>
<text x="388.5" y="142.0" font-size="10.9" font-weight="normal" fill="#606060" text-anchor="start" font-family="Liberation Sans" stroke="#606060" stroke-width="0.3" >normale Ausführung</text>
<text x="394" y="174" font-size="12.4" font-weight="normal" fill="#000" text-anchor="start" font-family="Liberation Sans" stroke="#000" stroke-width="0.3" >Bezeichnung</text>
<text x="587" y="174" font-size="12.4" font-weight="normal" fill="#000" text-anchor="start" font-family="Liberation Sans" stroke="#000" stroke-width="0.3" >Profilhöhe h</text>
<text x="674" y="174" font-size="12.4" font-weight="normal" fill="#000" text-anchor="start" font-family="Liberation Sans" stroke="#000" stroke-width="0.3" >Profilbreite b</text>
<text x="762" y="174" font-size="12.4" font-weight="normal" fill="#000" text-anchor="start" font-family="Liberation Sans" stroke="#000" stroke-width="0.3" >Gewicht G</text>
<circle cx="385" cy="195.5" r="4.2" fill="#16A016"/>
<path d="M393.5 188.5 H401 L404.5 192 V200.5 H393.5Z" fill="#fff" stroke="#6A6A6A" stroke-width="1"/><path d="M401 188.5 V192 H404.5" fill="#E8E8E8" stroke="#6A6A6A" stroke-width="0.8"/><path d="M394.5 201.5 H405.5 V192.5" stroke="#C0C0C0" stroke-width="1" fill="none"/>
<text x="408.5" y="200" font-size="11.9" font-weight="normal" fill="#000" text-anchor="start" font-family="Liberation Sans" stroke="#000" stroke-width="0.3" >HE100B</text>
<text x="665" y="200" font-size="11.9" font-weight="normal" fill="#000" text-anchor="end" font-family="Liberation Sans" stroke="#000" stroke-width="0.3" >100.0 mm</text>
<text x="753" y="200" font-size="11.9" font-weight="normal" fill="#000" text-anchor="end" font-family="Liberation Sans" stroke="#000" stroke-width="0.3" >100.0 mm</text>
<text x="846.8" y="200" font-size="11.9" font-weight="normal" fill="#000" text-anchor="end" font-family="Liberation Sans" stroke="#000" stroke-width="0.3" letter-spacing="0.8">20.40 kg/m</text>
<text x="901.8" y="200" font-size="11.9" font-weight="normal" fill="#858A86" text-anchor="end" font-family="Liberation Sans" stroke="#858A86" stroke-width="0.3" letter-spacing="0.8">-1-</text>
<circle cx="385" cy="210.5" r="4.2" fill="#16A016"/>
<path d="M393.5 203.5 H401 L404.5 207 V215.5 H393.5Z" fill="#fff" stroke="#6A6A6A" stroke-width="1"/><path d="M401 203.5 V207 H404.5" fill="#E8E8E8" stroke="#6A6A6A" stroke-width="0.8"/><path d="M394.5 216.5 H405.5 V207.5" stroke="#C0C0C0" stroke-width="1" fill="none"/>
<text x="408.5" y="215" font-size="11.9" font-weight="normal" fill="#000" text-anchor="start" font-family="Liberation Sans" stroke="#000" stroke-width="0.3" >HE120B</text>
<text x="665" y="215" font-size="11.9" font-weight="normal" fill="#000" text-anchor="end" font-family="Liberation Sans" stroke="#000" stroke-width="0.3" >120.0 mm</text>
<text x="753" y="215" font-size="11.9" font-weight="normal" fill="#000" text-anchor="end" font-family="Liberation Sans" stroke="#000" stroke-width="0.3" >120.0 mm</text>
<text x="846.8" y="215" font-size="11.9" font-weight="normal" fill="#000" text-anchor="end" font-family="Liberation Sans" stroke="#000" stroke-width="0.3" letter-spacing="0.8">26.70 kg/m</text>
<text x="901.8" y="215" font-size="11.9" font-weight="normal" fill="#858A86" text-anchor="end" font-family="Liberation Sans" stroke="#858A86" stroke-width="0.3" letter-spacing="0.8">-2-</text>
<circle cx="385" cy="225.5" r="4.2" fill="#16A016"/>
<path d="M393.5 218.5 H401 L404.5 222 V230.5 H393.5Z" fill="#fff" stroke="#6A6A6A" stroke-width="1"/><path d="M401 218.5 V222 H404.5" fill="#E8E8E8" stroke="#6A6A6A" stroke-width="0.8"/><path d="M394.5 231.5 H405.5 V222.5" stroke="#C0C0C0" stroke-width="1" fill="none"/>
<text x="408.5" y="230" font-size="11.9" font-weight="normal" fill="#000" text-anchor="start" font-family="Liberation Sans" stroke="#000" stroke-width="0.3" >HE140B</text>
<text x="665" y="230" font-size="11.9" font-weight="normal" fill="#000" text-anchor="end" font-family="Liberation Sans" stroke="#000" stroke-width="0.3" >140.0 mm</text>
<text x="753" y="230" font-size="11.9" font-weight="normal" fill="#000" text-anchor="end" font-family="Liberation Sans" stroke="#000" stroke-width="0.3" >140.0 mm</text>
<text x="846.8" y="230" font-size="11.9" font-weight="normal" fill="#000" text-anchor="end" font-family="Liberation Sans" stroke="#000" stroke-width="0.3" letter-spacing="0.8">33.70 kg/m</text>
<text x="901.8" y="230" font-size="11.9" font-weight="normal" fill="#858A86" text-anchor="end" font-family="Liberation Sans" stroke="#858A86" stroke-width="0.3" letter-spacing="0.8">-3-</text>
<circle cx="385" cy="240.5" r="4.2" fill="#16A016"/>
<path d="M393.5 233.5 H401 L404.5 237 V245.5 H393.5Z" fill="#fff" stroke="#6A6A6A" stroke-width="1"/><path d="M401 233.5 V237 H404.5" fill="#E8E8E8" stroke="#6A6A6A" stroke-width="0.8"/><path d="M394.5 246.5 H405.5 V237.5" stroke="#C0C0C0" stroke-width="1" fill="none"/>
<text x="408.5" y="245" font-size="11.9" font-weight="normal" fill="#000" text-anchor="start" font-family="Liberation Sans" stroke="#000" stroke-width="0.3" >HE160B</text>
<text x="665" y="245" font-size="11.9" font-weight="normal" fill="#000" text-anchor="end" font-family="Liberation Sans" stroke="#000" stroke-width="0.3" >160.0 mm</text>
<text x="753" y="245" font-size="11.9" font-weight="normal" fill="#000" text-anchor="end" font-family="Liberation Sans" stroke="#000" stroke-width="0.3" >160.0 mm</text>
<text x="846.8" y="245" font-size="11.9" font-weight="normal" fill="#000" text-anchor="end" font-family="Liberation Sans" stroke="#000" stroke-width="0.3" letter-spacing="0.8">42.60 kg/m</text>
<text x="901.8" y="245" font-size="11.9" font-weight="normal" fill="#858A86" text-anchor="end" font-family="Liberation Sans" stroke="#858A86" stroke-width="0.3" letter-spacing="0.8">-4-</text>
<circle cx="385" cy="255.5" r="4.2" fill="#16A016"/>
<path d="M393.5 248.5 H401 L404.5 252 V260.5 H393.5Z" fill="#fff" stroke="#6A6A6A" stroke-width="1"/><path d="M401 248.5 V252 H404.5" fill="#E8E8E8" stroke="#6A6A6A" stroke-width="0.8"/><path d="M394.5 261.5 H405.5 V252.5" stroke="#C0C0C0" stroke-width="1" fill="none"/>
<text x="408.5" y="260" font-size="11.9" font-weight="normal" fill="#000" text-anchor="start" font-family="Liberation Sans" stroke="#000" stroke-width="0.3" >HE180B</text>
<text x="665" y="260" font-size="11.9" font-weight="normal" fill="#000" text-anchor="end" font-family="Liberation Sans" stroke="#000" stroke-width="0.3" >180.0 mm</text>
<text x="753" y="260" font-size="11.9" font-weight="normal" fill="#000" text-anchor="end" font-family="Liberation Sans" stroke="#000" stroke-width="0.3" >180.0 mm</text>
<text x="846.8" y="260" font-size="11.9" font-weight="normal" fill="#000" text-anchor="end" font-family="Liberation Sans" stroke="#000" stroke-width="0.3" letter-spacing="0.8">51.20 kg/m</text>
<text x="901.8" y="260" font-size="11.9" font-weight="normal" fill="#858A86" text-anchor="end" font-family="Liberation Sans" stroke="#858A86" stroke-width="0.3" letter-spacing="0.8">-5-</text>
<circle cx="385" cy="270.5" r="4.2" fill="#16A016"/>
<path d="M393.5 263.5 H401 L404.5 267 V275.5 H393.5Z" fill="#fff" stroke="#6A6A6A" stroke-width="1"/><path d="M401 263.5 V267 H404.5" fill="#E8E8E8" stroke="#6A6A6A" stroke-width="0.8"/><path d="M394.5 276.5 H405.5 V267.5" stroke="#C0C0C0" stroke-width="1" fill="none"/>
<text x="408.5" y="275" font-size="11.9" font-weight="normal" fill="#000" text-anchor="start" font-family="Liberation Sans" stroke="#000" stroke-width="0.3" >HE200B</text>
<text x="665" y="275" font-size="11.9" font-weight="normal" fill="#000" text-anchor="end" font-family="Liberation Sans" stroke="#000" stroke-width="0.3" >200.0 mm</text>
<text x="753" y="275" font-size="11.9" font-weight="normal" fill="#000" text-anchor="end" font-family="Liberation Sans" stroke="#000" stroke-width="0.3" >200.0 mm</text>
<text x="846.8" y="275" font-size="11.9" font-weight="normal" fill="#000" text-anchor="end" font-family="Liberation Sans" stroke="#000" stroke-width="0.3" letter-spacing="0.8">61.30 kg/m</text>
<text x="901.8" y="275" font-size="11.9" font-weight="normal" fill="#858A86" text-anchor="end" font-family="Liberation Sans" stroke="#858A86" stroke-width="0.3" letter-spacing="0.8">-6-</text>
<circle cx="385" cy="285.5" r="4.2" fill="#16A016"/>
<path d="M393.5 278.5 H401 L404.5 282 V290.5 H393.5Z" fill="#fff" stroke="#6A6A6A" stroke-width="1"/><path d="M401 278.5 V282 H404.5" fill="#E8E8E8" stroke="#6A6A6A" stroke-width="0.8"/><path d="M394.5 291.5 H405.5 V282.5" stroke="#C0C0C0" stroke-width="1" fill="none"/>
<text x="408.5" y="290" font-size="11.9" font-weight="normal" fill="#000" text-anchor="start" font-family="Liberation Sans" stroke="#000" stroke-width="0.3" >HE220B</text>
<text x="665" y="290" font-size="11.9" font-weight="normal" fill="#000" text-anchor="end" font-family="Liberation Sans" stroke="#000" stroke-width="0.3" >220.0 mm</text>
<text x="753" y="290" font-size="11.9" font-weight="normal" fill="#000" text-anchor="end" font-family="Liberation Sans" stroke="#000" stroke-width="0.3" >220.0 mm</text>
<text x="846.8" y="290" font-size="11.9" font-weight="normal" fill="#000" text-anchor="end" font-family="Liberation Sans" stroke="#000" stroke-width="0.3" letter-spacing="0.8">71.50 kg/m</text>
<text x="901.8" y="290" font-size="11.9" font-weight="normal" fill="#858A86" text-anchor="end" font-family="Liberation Sans" stroke="#858A86" stroke-width="0.3" letter-spacing="0.8">-7-</text>
<circle cx="385" cy="300.5" r="4.2" fill="#16A016"/>
<path d="M393.5 293.5 H401 L404.5 297 V305.5 H393.5Z" fill="#fff" stroke="#6A6A6A" stroke-width="1"/><path d="M401 293.5 V297 H404.5" fill="#E8E8E8" stroke="#6A6A6A" stroke-width="0.8"/><path d="M394.5 306.5 H405.5 V297.5" stroke="#C0C0C0" stroke-width="1" fill="none"/>
<text x="408.5" y="305" font-size="11.9" font-weight="normal" fill="#000" text-anchor="start" font-family="Liberation Sans" stroke="#000" stroke-width="0.3" >HE240B</text>
<text x="665" y="305" font-size="11.9" font-weight="normal" fill="#000" text-anchor="end" font-family="Liberation Sans" stroke="#000" stroke-width="0.3" >240.0 mm</text>
<text x="753" y="305" font-size="11.9" font-weight="normal" fill="#000" text-anchor="end" font-family="Liberation Sans" stroke="#000" stroke-width="0.3" >240.0 mm</text>
<text x="846.8" y="305" font-size="11.9" font-weight="normal" fill="#000" text-anchor="end" font-family="Liberation Sans" stroke="#000" stroke-width="0.3" letter-spacing="0.8">83.20 kg/m</text>
<text x="901.8" y="305" font-size="11.9" font-weight="normal" fill="#858A86" text-anchor="end" font-family="Liberation Sans" stroke="#858A86" stroke-width="0.3" letter-spacing="0.8">-8-</text>
<circle cx="385" cy="315.5" r="4.2" fill="#16A016"/>
<path d="M393.5 308.5 H401 L404.5 312 V320.5 H393.5Z" fill="#fff" stroke="#6A6A6A" stroke-width="1"/><path d="M401 308.5 V312 H404.5" fill="#E8E8E8" stroke="#6A6A6A" stroke-width="0.8"/><path d="M394.5 321.5 H405.5 V312.5" stroke="#C0C0C0" stroke-width="1" fill="none"/>
<text x="408.5" y="320" font-size="11.9" font-weight="normal" fill="#000" text-anchor="start" font-family="Liberation Sans" stroke="#000" stroke-width="0.3" >HE260B</text>
<text x="665" y="320" font-size="11.9" font-weight="normal" fill="#000" text-anchor="end" font-family="Liberation Sans" stroke="#000" stroke-width="0.3" >260.0 mm</text>
<text x="753" y="320" font-size="11.9" font-weight="normal" fill="#000" text-anchor="end" font-family="Liberation Sans" stroke="#000" stroke-width="0.3" >260.0 mm</text>
<text x="846.8" y="320" font-size="11.9" font-weight="normal" fill="#000" text-anchor="end" font-family="Liberation Sans" stroke="#000" stroke-width="0.3" letter-spacing="0.8">93.00 kg/m</text>
<text x="901.8" y="320" font-size="11.9" font-weight="normal" fill="#858A86" text-anchor="end" font-family="Liberation Sans" stroke="#858A86" stroke-width="0.3" letter-spacing="0.8">-9-</text>
<circle cx="385" cy="330.5" r="4.2" fill="#16A016"/>
<path d="M393.5 323.5 H401 L404.5 327 V335.5 H393.5Z" fill="#fff" stroke="#6A6A6A" stroke-width="1"/><path d="M401 323.5 V327 H404.5" fill="#E8E8E8" stroke="#6A6A6A" stroke-width="0.8"/><path d="M394.5 336.5 H405.5 V327.5" stroke="#C0C0C0" stroke-width="1" fill="none"/>
<text x="408.5" y="335" font-size="11.9" font-weight="normal" fill="#000" text-anchor="start" font-family="Liberation Sans" stroke="#000" stroke-width="0.3" >HE280B</text>
<text x="665" y="335" font-size="11.9" font-weight="normal" fill="#000" text-anchor="end" font-family="Liberation Sans" stroke="#000" stroke-width="0.3" >280.0 mm</text>
<text x="753" y="335" font-size="11.9" font-weight="normal" fill="#000" text-anchor="end" font-family="Liberation Sans" stroke="#000" stroke-width="0.3" >280.0 mm</text>
<text x="846.8" y="335" font-size="11.9" font-weight="normal" fill="#000" text-anchor="end" font-family="Liberation Sans" stroke="#000" stroke-width="0.3" letter-spacing="0.8">103.00 kg/m</text>
<text x="901.8" y="335" font-size="11.9" font-weight="normal" fill="#858A86" text-anchor="end" font-family="Liberation Sans" stroke="#858A86" stroke-width="0.3" letter-spacing="0.8">-10-</text>
<circle cx="385" cy="345.5" r="4.2" fill="#16A016"/>
<path d="M393.5 338.5 H401 L404.5 342 V350.5 H393.5Z" fill="#fff" stroke="#6A6A6A" stroke-width="1"/><path d="M401 338.5 V342 H404.5" fill="#E8E8E8" stroke="#6A6A6A" stroke-width="0.8"/><path d="M394.5 351.5 H405.5 V342.5" stroke="#C0C0C0" stroke-width="1" fill="none"/>
<text x="408.5" y="350" font-size="11.9" font-weight="normal" fill="#000" text-anchor="start" font-family="Liberation Sans" stroke="#000" stroke-width="0.3" >HE300B</text>
<text x="665" y="350" font-size="11.9" font-weight="normal" fill="#000" text-anchor="end" font-family="Liberation Sans" stroke="#000" stroke-width="0.3" >300.0 mm</text>
<text x="753" y="350" font-size="11.9" font-weight="normal" fill="#000" text-anchor="end" font-family="Liberation Sans" stroke="#000" stroke-width="0.3" >300.0 mm</text>
<text x="846.8" y="350" font-size="11.9" font-weight="normal" fill="#000" text-anchor="end" font-family="Liberation Sans" stroke="#000" stroke-width="0.3" letter-spacing="0.8">117.00 kg/m</text>
<text x="901.8" y="350" font-size="11.9" font-weight="normal" fill="#858A86" text-anchor="end" font-family="Liberation Sans" stroke="#858A86" stroke-width="0.3" letter-spacing="0.8">-11-</text>
<circle cx="385" cy="360.5" r="4.2" fill="#16A016"/>
<path d="M393.5 353.5 H401 L404.5 357 V365.5 H393.5Z" fill="#fff" stroke="#6A6A6A" stroke-width="1"/><path d="M401 353.5 V357 H404.5" fill="#E8E8E8" stroke="#6A6A6A" stroke-width="0.8"/><path d="M394.5 366.5 H405.5 V357.5" stroke="#C0C0C0" stroke-width="1" fill="none"/>
<text x="408.5" y="365" font-size="11.9" font-weight="normal" fill="#000" text-anchor="start" font-family="Liberation Sans" stroke="#000" stroke-width="0.3" >HE320B</text>
<text x="665" y="365" font-size="11.9" font-weight="normal" fill="#000" text-anchor="end" font-family="Liberation Sans" stroke="#000" stroke-width="0.3" >320.0 mm</text>
<text x="753" y="365" font-size="11.9" font-weight="normal" fill="#000" text-anchor="end" font-family="Liberation Sans" stroke="#000" stroke-width="0.3" >300.0 mm</text>
<text x="846.8" y="365" font-size="11.9" font-weight="normal" fill="#000" text-anchor="end" font-family="Liberation Sans" stroke="#000" stroke-width="0.3" letter-spacing="0.8">127.00 kg/m</text>
<text x="901.8" y="365" font-size="11.9" font-weight="normal" fill="#858A86" text-anchor="end" font-family="Liberation Sans" stroke="#858A86" stroke-width="0.3" letter-spacing="0.8">-12-</text>
<circle cx="385" cy="375.5" r="4.2" fill="#16A016"/>
<path d="M393.5 368.5 H401 L404.5 372 V380.5 H393.5Z" fill="#fff" stroke="#6A6A6A" stroke-width="1"/><path d="M401 368.5 V372 H404.5" fill="#E8E8E8" stroke="#6A6A6A" stroke-width="0.8"/><path d="M394.5 381.5 H405.5 V372.5" stroke="#C0C0C0" stroke-width="1" fill="none"/>
<text x="408.5" y="380" font-size="11.9" font-weight="normal" fill="#000" text-anchor="start" font-family="Liberation Sans" stroke="#000" stroke-width="0.3" >HE340B</text>
<text x="665" y="380" font-size="11.9" font-weight="normal" fill="#000" text-anchor="end" font-family="Liberation Sans" stroke="#000" stroke-width="0.3" >340.0 mm</text>
<text x="753" y="380" font-size="11.9" font-weight="normal" fill="#000" text-anchor="end" font-family="Liberation Sans" stroke="#000" stroke-width="0.3" >300.0 mm</text>
<text x="846.8" y="380" font-size="11.9" font-weight="normal" fill="#000" text-anchor="end" font-family="Liberation Sans" stroke="#000" stroke-width="0.3" letter-spacing="0.8">134.00 kg/m</text>
<text x="901.8" y="380" font-size="11.9" font-weight="normal" fill="#858A86" text-anchor="end" font-family="Liberation Sans" stroke="#858A86" stroke-width="0.3" letter-spacing="0.8">-13-</text>
<circle cx="385" cy="390.5" r="4.2" fill="#16A016"/>
<path d="M393.5 383.5 H401 L404.5 387 V395.5 H393.5Z" fill="#fff" stroke="#6A6A6A" stroke-width="1"/><path d="M401 383.5 V387 H404.5" fill="#E8E8E8" stroke="#6A6A6A" stroke-width="0.8"/><path d="M394.5 396.5 H405.5 V387.5" stroke="#C0C0C0" stroke-width="1" fill="none"/>
<text x="408.5" y="395" font-size="11.9" font-weight="normal" fill="#000" text-anchor="start" font-family="Liberation Sans" stroke="#000" stroke-width="0.3" >HE360B</text>
<text x="665" y="395" font-size="11.9" font-weight="normal" fill="#000" text-anchor="end" font-family="Liberation Sans" stroke="#000" stroke-width="0.3" >360.0 mm</text>
<text x="753" y="395" font-size="11.9" font-weight="normal" fill="#000" text-anchor="end" font-family="Liberation Sans" stroke="#000" stroke-width="0.3" >300.0 mm</text>
<text x="846.8" y="395" font-size="11.9" font-weight="normal" fill="#000" text-anchor="end" font-family="Liberation Sans" stroke="#000" stroke-width="0.3" letter-spacing="0.8">142.00 kg/m</text>
<text x="901.8" y="395" font-size="11.9" font-weight="normal" fill="#858A86" text-anchor="end" font-family="Liberation Sans" stroke="#858A86" stroke-width="0.3" letter-spacing="0.8">-14-</text>
<circle cx="385" cy="405.5" r="4.2" fill="#16A016"/>
<path d="M393.5 398.5 H401 L404.5 402 V410.5 H393.5Z" fill="url(#gPink)" stroke="#6A6A6A" stroke-width="1"/><path d="M401 398.5 V402 H404.5" fill="#E8E8E8" stroke="#6A6A6A" stroke-width="0.8"/><path d="M394.5 411.5 H405.5 V402.5" stroke="#C0C0C0" stroke-width="1" fill="none"/>
<text x="408.5" y="410" font-size="11.9" font-weight="bold" fill="#000" text-anchor="start" font-family="Liberation Sans" >HE400B</text>
<text x="665" y="410" font-size="11.9" font-weight="bold" fill="#000" text-anchor="end" font-family="Liberation Sans" >400.0 mm</text>
<text x="753" y="410" font-size="11.9" font-weight="bold" fill="#000" text-anchor="end" font-family="Liberation Sans" >300.0 mm</text>
<text x="846.8" y="410" font-size="11.9" font-weight="bold" fill="#000" text-anchor="end" font-family="Liberation Sans" letter-spacing="0.8">155.00 kg/m</text>
<text x="901.8" y="410" font-size="11.9" font-weight="normal" fill="#858A86" text-anchor="end" font-family="Liberation Sans" stroke="#858A86" stroke-width="0.3" letter-spacing="0.8">-15-</text>
<circle cx="385" cy="420.5" r="4.2" fill="#16A016"/>
<path d="M393.5 413.5 H401 L404.5 417 V425.5 H393.5Z" fill="#fff" stroke="#6A6A6A" stroke-width="1"/><path d="M401 413.5 V417 H404.5" fill="#E8E8E8" stroke="#6A6A6A" stroke-width="0.8"/><path d="M394.5 426.5 H405.5 V417.5" stroke="#C0C0C0" stroke-width="1" fill="none"/>
<text x="408.5" y="425" font-size="11.9" font-weight="normal" fill="#000" text-anchor="start" font-family="Liberation Sans" stroke="#000" stroke-width="0.3" >HE450B</text>
<text x="665" y="425" font-size="11.9" font-weight="normal" fill="#000" text-anchor="end" font-family="Liberation Sans" stroke="#000" stroke-width="0.3" >450.0 mm</text>
<text x="753" y="425" font-size="11.9" font-weight="normal" fill="#000" text-anchor="end" font-family="Liberation Sans" stroke="#000" stroke-width="0.3" >300.0 mm</text>
<text x="846.8" y="425" font-size="11.9" font-weight="normal" fill="#000" text-anchor="end" font-family="Liberation Sans" stroke="#000" stroke-width="0.3" letter-spacing="0.8">171.00 kg/m</text>
<text x="901.8" y="425" font-size="11.9" font-weight="normal" fill="#858A86" text-anchor="end" font-family="Liberation Sans" stroke="#858A86" stroke-width="0.3" letter-spacing="0.8">-16-</text>
<circle cx="385" cy="435.5" r="4.2" fill="#16A016"/>
<path d="M393.5 428.5 H401 L404.5 432 V440.5 H393.5Z" fill="#fff" stroke="#6A6A6A" stroke-width="1"/><path d="M401 428.5 V432 H404.5" fill="#E8E8E8" stroke="#6A6A6A" stroke-width="0.8"/><path d="M394.5 441.5 H405.5 V432.5" stroke="#C0C0C0" stroke-width="1" fill="none"/>
<text x="408.5" y="440" font-size="11.9" font-weight="normal" fill="#000" text-anchor="start" font-family="Liberation Sans" stroke="#000" stroke-width="0.3" >HE500B</text>
<text x="665" y="440" font-size="11.9" font-weight="normal" fill="#000" text-anchor="end" font-family="Liberation Sans" stroke="#000" stroke-width="0.3" >500.0 mm</text>
<text x="753" y="440" font-size="11.9" font-weight="normal" fill="#000" text-anchor="end" font-family="Liberation Sans" stroke="#000" stroke-width="0.3" >300.0 mm</text>
<text x="846.8" y="440" font-size="11.9" font-weight="normal" fill="#000" text-anchor="end" font-family="Liberation Sans" stroke="#000" stroke-width="0.3" letter-spacing="0.8">187.00 kg/m</text>
<text x="901.8" y="440" font-size="11.9" font-weight="normal" fill="#858A86" text-anchor="end" font-family="Liberation Sans" stroke="#858A86" stroke-width="0.3" letter-spacing="0.8">-17-</text>
<circle cx="385" cy="450.5" r="4.2" fill="#16A016"/>
<path d="M393.5 443.5 H401 L404.5 447 V455.5 H393.5Z" fill="#fff" stroke="#6A6A6A" stroke-width="1"/><path d="M401 443.5 V447 H404.5" fill="#E8E8E8" stroke="#6A6A6A" stroke-width="0.8"/><path d="M394.5 456.5 H405.5 V447.5" stroke="#C0C0C0" stroke-width="1" fill="none"/>
<text x="408.5" y="455" font-size="11.9" font-weight="normal" fill="#000" text-anchor="start" font-family="Liberation Sans" stroke="#000" stroke-width="0.3" >HE550B</text>
<text x="665" y="455" font-size="11.9" font-weight="normal" fill="#000" text-anchor="end" font-family="Liberation Sans" stroke="#000" stroke-width="0.3" >550.0 mm</text>
<text x="753" y="455" font-size="11.9" font-weight="normal" fill="#000" text-anchor="end" font-family="Liberation Sans" stroke="#000" stroke-width="0.3" >300.0 mm</text>
<text x="846.8" y="455" font-size="11.9" font-weight="normal" fill="#000" text-anchor="end" font-family="Liberation Sans" stroke="#000" stroke-width="0.3" letter-spacing="0.8">199.00 kg/m</text>
<text x="901.8" y="455" font-size="11.9" font-weight="normal" fill="#858A86" text-anchor="end" font-family="Liberation Sans" stroke="#858A86" stroke-width="0.3" letter-spacing="0.8">-18-</text>
<circle cx="385" cy="465.5" r="4.2" fill="#16A016"/>
<path d="M393.5 458.5 H401 L404.5 462 V470.5 H393.5Z" fill="#fff" stroke="#6A6A6A" stroke-width="1"/><path d="M401 458.5 V462 H404.5" fill="#E8E8E8" stroke="#6A6A6A" stroke-width="0.8"/><path d="M394.5 471.5 H405.5 V462.5" stroke="#C0C0C0" stroke-width="1" fill="none"/>
<text x="408.5" y="470" font-size="11.9" font-weight="normal" fill="#000" text-anchor="start" font-family="Liberation Sans" stroke="#000" stroke-width="0.3" >HE600B</text>
<text x="665" y="470" font-size="11.9" font-weight="normal" fill="#000" text-anchor="end" font-family="Liberation Sans" stroke="#000" stroke-width="0.3" >600.0 mm</text>
<text x="753" y="470" font-size="11.9" font-weight="normal" fill="#000" text-anchor="end" font-family="Liberation Sans" stroke="#000" stroke-width="0.3" >300.0 mm</text>
<text x="846.8" y="470" font-size="11.9" font-weight="normal" fill="#000" text-anchor="end" font-family="Liberation Sans" stroke="#000" stroke-width="0.3" letter-spacing="0.8">212.00 kg/m</text>
<text x="901.8" y="470" font-size="11.9" font-weight="normal" fill="#858A86" text-anchor="end" font-family="Liberation Sans" stroke="#858A86" stroke-width="0.3" letter-spacing="0.8">-19-</text>
<circle cx="385" cy="480.5" r="4.2" fill="#16A016"/>
<path d="M393.5 473.5 H401 L404.5 477 V485.5 H393.5Z" fill="#fff" stroke="#6A6A6A" stroke-width="1"/><path d="M401 473.5 V477 H404.5" fill="#E8E8E8" stroke="#6A6A6A" stroke-width="0.8"/><path d="M394.5 486.5 H405.5 V477.5" stroke="#C0C0C0" stroke-width="1" fill="none"/>
<text x="408.5" y="485" font-size="11.9" font-weight="normal" fill="#000" text-anchor="start" font-family="Liberation Sans" stroke="#000" stroke-width="0.3" >HE650B</text>
<text x="665" y="485" font-size="11.9" font-weight="normal" fill="#000" text-anchor="end" font-family="Liberation Sans" stroke="#000" stroke-width="0.3" >650.0 mm</text>
<text x="753" y="485" font-size="11.9" font-weight="normal" fill="#000" text-anchor="end" font-family="Liberation Sans" stroke="#000" stroke-width="0.3" >300.0 mm</text>
<text x="846.8" y="485" font-size="11.9" font-weight="normal" fill="#000" text-anchor="end" font-family="Liberation Sans" stroke="#000" stroke-width="0.3" letter-spacing="0.8">225.00 kg/m</text>
<text x="901.8" y="485" font-size="11.9" font-weight="normal" fill="#858A86" text-anchor="end" font-family="Liberation Sans" stroke="#858A86" stroke-width="0.3" letter-spacing="0.8">-20-</text>
<circle cx="385" cy="495.5" r="4.2" fill="#16A016"/>
<path d="M393.5 488.5 H401 L404.5 492 V500.5 H393.5Z" fill="#fff" stroke="#6A6A6A" stroke-width="1"/><path d="M401 488.5 V492 H404.5" fill="#E8E8E8" stroke="#6A6A6A" stroke-width="0.8"/><path d="M394.5 501.5 H405.5 V492.5" stroke="#C0C0C0" stroke-width="1" fill="none"/>
<text x="408.5" y="500" font-size="11.9" font-weight="normal" fill="#000" text-anchor="start" font-family="Liberation Sans" stroke="#000" stroke-width="0.3" >HE700B</text>
<text x="665" y="500" font-size="11.9" font-weight="normal" fill="#000" text-anchor="end" font-family="Liberation Sans" stroke="#000" stroke-width="0.3" >700.0 mm</text>
<text x="753" y="500" font-size="11.9" font-weight="normal" fill="#000" text-anchor="end" font-family="Liberation Sans" stroke="#000" stroke-width="0.3" >300.0 mm</text>
<text x="846.8" y="500" font-size="11.9" font-weight="normal" fill="#000" text-anchor="end" font-family="Liberation Sans" stroke="#000" stroke-width="0.3" letter-spacing="0.8">241.00 kg/m</text>
<text x="901.8" y="500" font-size="11.9" font-weight="normal" fill="#858A86" text-anchor="end" font-family="Liberation Sans" stroke="#858A86" stroke-width="0.3" letter-spacing="0.8">-21-</text>
<circle cx="385" cy="510.5" r="4.2" fill="#16A016"/>
<path d="M393.5 503.5 H401 L404.5 507 V515.5 H393.5Z" fill="#fff" stroke="#6A6A6A" stroke-width="1"/><path d="M401 503.5 V507 H404.5" fill="#E8E8E8" stroke="#6A6A6A" stroke-width="0.8"/><path d="M394.5 516.5 H405.5 V507.5" stroke="#C0C0C0" stroke-width="1" fill="none"/>
<text x="408.5" y="515" font-size="11.9" font-weight="normal" fill="#000" text-anchor="start" font-family="Liberation Sans" stroke="#000" stroke-width="0.3" >HE800B</text>
<text x="665" y="515" font-size="11.9" font-weight="normal" fill="#000" text-anchor="end" font-family="Liberation Sans" stroke="#000" stroke-width="0.3" >800.0 mm</text>
<text x="753" y="515" font-size="11.9" font-weight="normal" fill="#000" text-anchor="end" font-family="Liberation Sans" stroke="#000" stroke-width="0.3" >300.0 mm</text>
<text x="846.8" y="515" font-size="11.9" font-weight="normal" fill="#000" text-anchor="end" font-family="Liberation Sans" stroke="#000" stroke-width="0.3" letter-spacing="0.8">262.00 kg/m</text>
<text x="901.8" y="515" font-size="11.9" font-weight="normal" fill="#858A86" text-anchor="end" font-family="Liberation Sans" stroke="#858A86" stroke-width="0.3" letter-spacing="0.8">-22-</text>
<circle cx="385" cy="525.5" r="4.2" fill="#16A016"/>
<path d="M393.5 518.5 H401 L404.5 522 V530.5 H393.5Z" fill="#fff" stroke="#6A6A6A" stroke-width="1"/><path d="M401 518.5 V522 H404.5" fill="#E8E8E8" stroke="#6A6A6A" stroke-width="0.8"/><path d="M394.5 531.5 H405.5 V522.5" stroke="#C0C0C0" stroke-width="1" fill="none"/>
<text x="408.5" y="530" font-size="11.9" font-weight="normal" fill="#000" text-anchor="start" font-family="Liberation Sans" stroke="#000" stroke-width="0.3" >HE900B</text>
<text x="665" y="530" font-size="11.9" font-weight="normal" fill="#000" text-anchor="end" font-family="Liberation Sans" stroke="#000" stroke-width="0.3" >900.0 mm</text>
<text x="753" y="530" font-size="11.9" font-weight="normal" fill="#000" text-anchor="end" font-family="Liberation Sans" stroke="#000" stroke-width="0.3" >300.0 mm</text>
<text x="846.8" y="530" font-size="11.9" font-weight="normal" fill="#000" text-anchor="end" font-family="Liberation Sans" stroke="#000" stroke-width="0.3" letter-spacing="0.8">291.00 kg/m</text>
<text x="901.8" y="530" font-size="11.9" font-weight="normal" fill="#858A86" text-anchor="end" font-family="Liberation Sans" stroke="#858A86" stroke-width="0.3" letter-spacing="0.8">-23-</text>
<circle cx="385" cy="540.5" r="4.2" fill="#16A016"/>
<path d="M393.5 533.5 H401 L404.5 537 V545.5 H393.5Z" fill="#fff" stroke="#6A6A6A" stroke-width="1"/><path d="M401 533.5 V537 H404.5" fill="#E8E8E8" stroke="#6A6A6A" stroke-width="0.8"/><path d="M394.5 546.5 H405.5 V537.5" stroke="#C0C0C0" stroke-width="1" fill="none"/>
<text x="408.5" y="545" font-size="11.9" font-weight="normal" fill="#000" text-anchor="start" font-family="Liberation Sans" stroke="#000" stroke-width="0.3" >HE1000B</text>
<text x="665" y="545" font-size="11.9" font-weight="normal" fill="#000" text-anchor="end" font-family="Liberation Sans" stroke="#000" stroke-width="0.3" >1000.0 mm</text>
<text x="753" y="545" font-size="11.9" font-weight="normal" fill="#000" text-anchor="end" font-family="Liberation Sans" stroke="#000" stroke-width="0.3" >300.0 mm</text>
<text x="846.8" y="545" font-size="11.9" font-weight="normal" fill="#000" text-anchor="end" font-family="Liberation Sans" stroke="#000" stroke-width="0.3" letter-spacing="0.8">314.00 kg/m</text>
<text x="901.8" y="545" font-size="11.9" font-weight="normal" fill="#858A86" text-anchor="end" font-family="Liberation Sans" stroke="#858A86" stroke-width="0.3" letter-spacing="0.8">-24-</text>
<path d="M478.5 403 L478.5 418 L482.5 414 L485.5 420 L488.0 419 L485.0 413 L489.5 413Z" fill="#E00000" stroke="#000" stroke-width="0.9" stroke-linejoin="round"/>
<circle cx="395.5" cy="588.5" r="4.2" fill="#16A016"/>
<text x="408" y="593" font-size="10.9" font-weight="normal" fill="#303030" text-anchor="start" font-family="Liberation Sans" stroke="#303030" stroke-width="0.3" >Gängige Abmessungen, diese Profile sollten bevorzugt ausgewählt werden</text>
<circle cx="395.5" cy="601.5" r="4.2" fill="#D8D020"/>
<text x="408" y="606" font-size="10.9" font-weight="normal" fill="#303030" text-anchor="start" font-family="Liberation Sans" stroke="#303030" stroke-width="0.3" >Lieferung unter Beachtung einer Mindestbestellmenge möglich</text>
<circle cx="395.5" cy="614.5" r="4.2" fill="#C88080"/>
<text x="408" y="619" font-size="10.9" font-weight="normal" fill="#303030" text-anchor="start" font-family="Liberation Sans" stroke="#303030" stroke-width="0.3" >Ergänzungsabmessungen, Lieferbarkeit beim Hersteller erfragen</text>
<circle cx="395.5" cy="627.5" r="4.2" fill="#A02020"/>
<text x="408" y="632" font-size="10.9" font-weight="normal" fill="#303030" text-anchor="start" font-family="Liberation Sans" stroke="#303030" stroke-width="0.3" >Seltene Profilabmessungen, Einsatz möglichst vermeiden</text>
<path d="M392 636 L399 643 M399 636 L392 643" stroke="#000" stroke-width="2"/>
<text x="408" y="645" font-size="10.9" font-weight="normal" fill="#303030" text-anchor="start" font-family="Liberation Sans" stroke="#303030" stroke-width="0.3" >Profil wird nicht (mehr) hergestellt</text>
</g>
<g clip-path="url(#cR)">
<circle cx="980" cy="95" r="5.2" fill="none" stroke="#000" stroke-width="1.6"/><circle cx="980" cy="95" r="1.9" fill="#000"/>
<text x="994" y="100" font-size="11.9" font-weight="bold" fill="#000" text-anchor="start" font-family="Liberation Sans" >Parameter</text>
<circle cx="1085" cy="95" r="5.2" fill="none" stroke="#C2C6CA" stroke-width="1.6"/>
<text x="1099.5" y="100" font-size="11.9" font-weight="bold" fill="#BEC3C8" text-anchor="start" font-family="Liberation Sans" >Grafik</text>
<path d="M1021 143 H1105 V149.6 H1074.6 Q1066.1 149.6 1066.1 158.1 V294.9 Q1066.1 303.4 1074.6 303.4 H1105 V310 H1021 V303.4 H1052.4 Q1060.9 303.4 1060.9 294.9 V158.1 Q1060.9 149.6 1052.4 149.6 H1021Z" fill="#5AA8B4" stroke="#3E4A4C" stroke-width="1.1"/>
<path d="M974.5 140 L974.5 313" stroke="#8C8C8C" stroke-width="1" fill="none"/>
<path d="M969 143.5 L1009 143.5" stroke="#8C8C8C" stroke-width="1" fill="none"/>
<path d="M969 156.5 L1004 156.5" stroke="#8C8C8C" stroke-width="1" fill="none"/>
<path d="M969 296.5 L990 296.5" stroke="#8C8C8C" stroke-width="1" fill="none"/>
<path d="M997 296.5 L1009 296.5" stroke="#8C8C8C" stroke-width="1" fill="none"/>
<path d="M969 310.5 L1009 310.5" stroke="#8C8C8C" stroke-width="1" fill="none"/>
<text x="963" y="154" font-size="12.5" font-family="Liberation Sans" fill="#000" stroke="#000" stroke-width="0.3">c</text>
<text x="963" y="307" font-size="12.5" font-family="Liberation Sans" fill="#000" stroke="#000" stroke-width="0.3">c</text>
<rect x="968" y="211" width="12" height="19" fill="#FDF9EF"/>
<text x="969.5" y="226" font-size="12.5" font-family="Liberation Sans" fill="#000" stroke="#000" stroke-width="0.3">d</text>
<path d="M993.5 220 L993.5 313" stroke="#8C8C8C" stroke-width="1" fill="none"/>
<path d="M989 220.5 L1009 220.5" stroke="#8C8C8C" stroke-width="1" fill="none"/>
<rect x="985" y="250" width="19" height="20" fill="#FDF9EF"/>
<text x="986" y="262" font-size="12.5" font-family="Liberation Sans" fill="#000" stroke="#000" stroke-width="0.3">e<tspan dy="3" font-size="10.5">y</tspan></text>
<path d="M1061.5 122 L1061.5 137" stroke="#8C8C8C" stroke-width="1" fill="none"/>
<path d="M1064.5 122 L1064.5 137" stroke="#8C8C8C" stroke-width="1" fill="none"/>
<path d="M1057 126.5 L1070 126.5" stroke="#8C8C8C" stroke-width="1" fill="none"/>
<text x="1069.5" y="124" font-size="12.5" font-family="Liberation Sans" fill="#000" stroke="#000" stroke-width="0.3">t<tspan dy="3" font-size="10.5">w</tspan></text>
<text x="1121" y="138" font-size="12.5" font-family="Liberation Sans" fill="#000" stroke="#000" stroke-width="0.3">t<tspan dy="3" font-size="10.5">f</tspan></text>
<path d="M1120 143.5 L1160 143.5" stroke="#8C8C8C" stroke-width="1" fill="none"/>
<path d="M1120 149.5 L1140 149.5" stroke="#8C8C8C" stroke-width="1" fill="none"/>
<path d="M1120 303.5 L1142 303.5" stroke="#8C8C8C" stroke-width="1" fill="none"/>
<path d="M1120 310.5 L1160 310.5" stroke="#8C8C8C" stroke-width="1" fill="none"/>
<path d="M1135.5 139 L1135.5 313" stroke="#8C8C8C" stroke-width="1" fill="none"/>
<path d="M1154.5 139 L1154.5 313" stroke="#8C8C8C" stroke-width="1" fill="none"/>
<rect x="1126" y="209" width="36" height="22" fill="#FDF9EF"/>
<text x="1127" y="224.5" font-size="12.5" font-family="Liberation Sans" fill="#000" stroke="#000" stroke-width="0.3">h<tspan dy="3" font-size="10.5">w</tspan></text>
<text x="1151" y="224.5" font-size="12.5" font-family="Liberation Sans" fill="#000" stroke="#000" stroke-width="0.3">h</text>
<text x="1121" y="322" font-size="12.5" font-family="Liberation Sans" fill="#000" stroke="#000" stroke-width="0.3">t<tspan dy="3" font-size="10.5">f</tspan></text>
<path d="M1021.5 279 L1021.5 299" stroke="#8C8C8C" stroke-width="1" fill="none"/>
<path d="M1054.5 279 L1054.5 299" stroke="#8C8C8C" stroke-width="1" fill="none"/>
<path d="M1017 286.5 L1028 286.5" stroke="#8C8C8C" stroke-width="1" fill="none"/>
<path d="M1048 286.5 L1060 286.5" stroke="#8C8C8C" stroke-width="1" fill="none"/>
<text x="1031" y="290" font-size="12.5" font-family="Liberation Sans" fill="#000" stroke="#000" stroke-width="0.3">b<tspan dy="3" font-size="10.5">r</tspan></text>
<text x="1076.5" y="286.5" font-size="12.5" font-family="Liberation Sans" fill="#000" stroke="#000" stroke-width="0.3">r</text>
<path d="M1082 290.5 L1070 299.5" stroke="#8C8C8C" stroke-width="1" fill="none"/>
<path d="M1066.5 302 L1071 295.5 L1073.5 299.5Z" fill="#8C8C8C"/>
<path d="M1017 327.5 L1034 327.5" stroke="#8C8C8C" stroke-width="1" fill="none"/>
<path d="M1052 327.5 L1069 327.5" stroke="#8C8C8C" stroke-width="1" fill="none"/>
<path d="M1021.5 317 L1021.5 332" stroke="#8C8C8C" stroke-width="1" fill="none"/>
<path d="M1063.5 317 L1063.5 332" stroke="#8C8C8C" stroke-width="1" fill="none"/>
<text x="1036" y="330" font-size="12.5" font-family="Liberation Sans" fill="#000" stroke="#000" stroke-width="0.3">e<tspan dy="3" font-size="10.5">z</tspan></text>
<path d="M1017 345.5 L1056 345.5" stroke="#8C8C8C" stroke-width="1" fill="none"/>
<path d="M1067 345.5 L1109 345.5" stroke="#8C8C8C" stroke-width="1" fill="none"/>
<path d="M1021.5 326 L1021.5 352" stroke="#8C8C8C" stroke-width="1" fill="none"/>
<path d="M1105.5 326 L1105.5 352" stroke="#8C8C8C" stroke-width="1" fill="none"/>
<text x="1057.5" y="348.5" font-size="12.5" font-family="Liberation Sans" fill="#000" stroke="#000" stroke-width="0.3">b</text>
<path d="M1031 226 L1063.5 226" stroke="#E01010" stroke-width="1.2" fill="none"/>
<path d="M1027.5 226 L1034.5 222.8 L1034.5 229.2Z" fill="#E01010"/>
<path d="M1063.5 226 L1063.5 253" stroke="#E01010" stroke-width="1.2" fill="none"/>
<path d="M1063.5 259 L1060.3 252 L1066.7 252Z" fill="#E01010"/>
<path d="M1066 226.5 H1093" stroke="#E01010" stroke-width="1" stroke-dasharray="1 1"/>
<path d="M1063.5 194 V226" stroke="#E01010" stroke-width="1" stroke-dasharray="1 1"/>
<text x="1029.5" y="216" font-size="12" font-weight="bold" fill="#E01010" text-anchor="start" font-family="Liberation Sans" >y</text>
<text x="1070.5" y="258" font-size="12" font-weight="bold" fill="#E01010" text-anchor="start" font-family="Liberation Sans" >z</text>
<text x="1069.5" y="221" font-size="12.4" font-weight="normal" fill="#000" text-anchor="start" font-family="Liberation Sans" stroke="#000" stroke-width="0.3" >S, M</text>
<text x="1179" y="147" font-size="13.8" font-weight="bold" fill="#000" text-anchor="start" font-family="Liberation Sans" >HE400B</text>
<text x="1179" y="163" font-size="10.9" font-weight="normal" fill="#000" text-anchor="start" font-family="Liberation Sans" stroke="#000" stroke-width="0.3" >doppelsymmetr. Querschnitt</text>
<text x="1178" y="197" font-size="12.5" font-family="Liberation Sans" fill="#000" stroke="#000" stroke-width="0.3">h</text>
<text x="1199" y="197" font-size="12.5" font-weight="normal" fill="#000" text-anchor="start" font-family="Liberation Mono" letter-spacing="0.5">=</text>
<text x="1280.5" y="197" font-size="12.5" font-weight="normal" fill="#000" text-anchor="end" font-family="Liberation Mono" letter-spacing="0.5">400.00</text>
<text x="1288" y="197" font-size="12.5" font-weight="normal" fill="#000" text-anchor="start" font-family="Liberation Mono" letter-spacing="0.5">mm</text>
<text x="1178" y="213" font-size="12.5" font-family="Liberation Sans" fill="#000" stroke="#000" stroke-width="0.3">b</text>
<text x="1199" y="213" font-size="12.5" font-weight="normal" fill="#000" text-anchor="start" font-family="Liberation Mono" letter-spacing="0.5">=</text>
<text x="1280.5" y="213" font-size="12.5" font-weight="normal" fill="#000" text-anchor="end" font-family="Liberation Mono" letter-spacing="0.5">300.00</text>
<text x="1288" y="213" font-size="12.5" font-weight="normal" fill="#000" text-anchor="start" font-family="Liberation Mono" letter-spacing="0.5">mm</text>
<text x="1178" y="229" font-size="12.5" font-family="Liberation Sans" fill="#000" stroke="#000" stroke-width="0.3">t<tspan dy="3" font-size="10.5">f</tspan></text>
<text x="1199" y="229" font-size="12.5" font-weight="normal" fill="#000" text-anchor="start" font-family="Liberation Mono" letter-spacing="0.5">=</text>
<text x="1280.5" y="229" font-size="12.5" font-weight="normal" fill="#000" text-anchor="end" font-family="Liberation Mono" letter-spacing="0.5">24.00</text>
<text x="1288" y="229" font-size="12.5" font-weight="normal" fill="#000" text-anchor="start" font-family="Liberation Mono" letter-spacing="0.5">mm</text>
<text x="1178" y="245" font-size="12.5" font-family="Liberation Sans" fill="#000" stroke="#000" stroke-width="0.3">t<tspan dy="3" font-size="10.5">w</tspan></text>
<text x="1199" y="245" font-size="12.5" font-weight="normal" fill="#000" text-anchor="start" font-family="Liberation Mono" letter-spacing="0.5">=</text>
<text x="1280.5" y="245" font-size="12.5" font-weight="normal" fill="#000" text-anchor="end" font-family="Liberation Mono" letter-spacing="0.5">13.50</text>
<text x="1288" y="245" font-size="12.5" font-weight="normal" fill="#000" text-anchor="start" font-family="Liberation Mono" letter-spacing="0.5">mm</text>
<text x="1178" y="261" font-size="12.5" font-family="Liberation Sans" fill="#000" stroke="#000" stroke-width="0.3">h<tspan dy="3" font-size="10.5">w</tspan></text>
<text x="1199" y="261" font-size="12.5" font-weight="normal" fill="#000" text-anchor="start" font-family="Liberation Mono" letter-spacing="0.5">=</text>
<text x="1280.5" y="261" font-size="12.5" font-weight="normal" fill="#000" text-anchor="end" font-family="Liberation Mono" letter-spacing="0.5">352.00</text>
<text x="1288" y="261" font-size="12.5" font-weight="normal" fill="#000" text-anchor="start" font-family="Liberation Mono" letter-spacing="0.5">mm</text>
<text x="1178" y="296" font-size="12.5" font-family="Liberation Sans" fill="#000" stroke="#000" stroke-width="0.3">G</text>
<text x="1199" y="296" font-size="12.5" font-weight="normal" fill="#000" text-anchor="start" font-family="Liberation Mono" letter-spacing="0.5">=</text>
<text x="1280.5" y="296" font-size="12.5" font-weight="normal" fill="#000" text-anchor="end" font-family="Liberation Mono" letter-spacing="0.5">155.00</text>
<text x="1288" y="296" font-size="12.5" font-weight="normal" fill="#000" text-anchor="start" font-family="Liberation Mono" letter-spacing="0.5">kg/m</text>
<text x="1178" y="312" font-size="12.5" font-family="Liberation Sans" fill="#000" stroke="#000" stroke-width="0.3">U</text>
<text x="1199" y="312" font-size="12.5" font-weight="normal" fill="#000" text-anchor="start" font-family="Liberation Mono" letter-spacing="0.5">=</text>
<text x="1280.5" y="312" font-size="12.5" font-weight="normal" fill="#000" text-anchor="end" font-family="Liberation Mono" letter-spacing="0.5">1.93</text>
<text x="1288" y="312" font-size="12.5" font-weight="normal" fill="#000" text-anchor="start" font-family="Liberation Mono" letter-spacing="0.5">m²/m</text>
<text x="969" y="383" font-size="11.7" font-weight="bold" fill="#6E7E78" text-anchor="start" font-family="Liberation Sans" >elastischer Schwerpunkt</text>
<text x="969" y="400" font-size="12.5" font-family="Liberation Sans" fill="#000" stroke="#000" stroke-width="0.3">e<tspan dy="3" font-size="10.5">y</tspan></text>
<text x="999" y="400" font-size="12.5" font-weight="normal" fill="#000" text-anchor="start" font-family="Liberation Mono" letter-spacing="0.5">=</text>
<text x="1080.5" y="400" font-size="12.5" font-weight="normal" fill="#000" text-anchor="end" font-family="Liberation Mono" letter-spacing="0.5">200.00</text>
<text x="1088" y="400" font-size="12.5" font-weight="normal" fill="#000" text-anchor="start" font-family="Liberation Mono" letter-spacing="0.5">mm</text>
<text x="1154" y="400" font-size="12.5" font-family="Liberation Sans" fill="#000" stroke="#000" stroke-width="0.3">e<tspan dy="3" font-size="10.5">z</tspan></text>
<text x="1184" y="400" font-size="12.5" font-weight="normal" fill="#000" text-anchor="start" font-family="Liberation Mono" letter-spacing="0.5">=</text>
<text x="1265.5" y="400" font-size="12.5" font-weight="normal" fill="#000" text-anchor="end" font-family="Liberation Mono" letter-spacing="0.5">150.00</text>
<text x="1273" y="400" font-size="12.5" font-weight="normal" fill="#000" text-anchor="start" font-family="Liberation Mono" letter-spacing="0.5">mm</text>
<text x="969" y="436" font-size="11.7" font-weight="bold" fill="#6E7E78" text-anchor="start" font-family="Liberation Sans" >Querschnittsflächen</text>
<text x="969" y="453.5" font-size="12.5" font-family="Liberation Sans" fill="#000" stroke="#000" stroke-width="0.3">A</text>
<text x="999" y="453.5" font-size="12.5" font-weight="normal" fill="#000" text-anchor="start" font-family="Liberation Mono" letter-spacing="0.5">=</text>
<text x="1080.5" y="453.5" font-size="12.5" font-weight="normal" fill="#000" text-anchor="end" font-family="Liberation Mono" letter-spacing="0.5">198.00</text>
<text x="1088" y="453.5" font-size="12.5" font-family="Liberation Mono" letter-spacing="0.5" fill="#000">cm<tspan dy="-4.5" font-size="9" font-family="Liberation Sans" stroke="#000" stroke-width="0.3">2</tspan></text>
<text x="1154" y="453.5" font-size="12.5" font-family="Liberation Sans" fill="#000" stroke="#000" stroke-width="0.3">A<tspan dy="3" font-size="10.5">W</tspan></text>
<text x="1184" y="453.5" font-size="12.5" font-weight="normal" fill="#000" text-anchor="start" font-family="Liberation Mono" letter-spacing="0.5">=</text>
<text x="1265.5" y="453.5" font-size="12.5" font-weight="normal" fill="#000" text-anchor="end" font-family="Liberation Mono" letter-spacing="0.5">47.52</text>
<text x="1273" y="453.5" font-size="12.5" font-family="Liberation Mono" letter-spacing="0.5" fill="#000">cm<tspan dy="-4.5" font-size="9" font-family="Liberation Sans" stroke="#000" stroke-width="0.3">2</tspan></text>
<text x="969" y="469.5" font-size="12.5" font-family="Liberation Sans" fill="#000" stroke="#000" stroke-width="0.3">A<tspan dy="3" font-size="10.5">vy</tspan></text>
<text x="999" y="469.5" font-size="12.5" font-weight="normal" fill="#000" text-anchor="start" font-family="Liberation Mono" letter-spacing="0.5">=</text>
<text x="1080.5" y="469.5" font-size="12.5" font-weight="normal" fill="#000" text-anchor="end" font-family="Liberation Mono" letter-spacing="0.5">144.00</text>
<text x="1088" y="469.5" font-size="12.5" font-family="Liberation Mono" letter-spacing="0.5" fill="#000">cm<tspan dy="-4.5" font-size="9" font-family="Liberation Sans" stroke="#000" stroke-width="0.3">2</tspan></text>
<text x="1154" y="469.5" font-size="12.5" font-family="Liberation Sans" fill="#000" stroke="#000" stroke-width="0.3">A<tspan dy="3" font-size="10.5">vz</tspan></text>
<text x="1184" y="469.5" font-size="12.5" font-weight="normal" fill="#000" text-anchor="start" font-family="Liberation Mono" letter-spacing="0.5">=</text>
<text x="1265.5" y="469.5" font-size="12.5" font-weight="normal" fill="#000" text-anchor="end" font-family="Liberation Mono" letter-spacing="0.5">70.20</text>
<text x="1273" y="469.5" font-size="12.5" font-family="Liberation Mono" letter-spacing="0.5" fill="#000">cm<tspan dy="-4.5" font-size="9" font-family="Liberation Sans" stroke="#000" stroke-width="0.3">2</tspan></text>
<text x="969" y="500" font-size="11.7" font-weight="bold" fill="#6E7E78" text-anchor="start" font-family="Liberation Sans" >Trägheitsmomente und -radien, Widerstandsmomente</text>
<text x="969" y="517.5" font-size="12.5" font-family="Liberation Sans" fill="#000" stroke="#000" stroke-width="0.3">I<tspan dy="3" font-size="10.5">y</tspan></text>
<text x="999" y="517.5" font-size="12.5" font-weight="normal" fill="#000" text-anchor="start" font-family="Liberation Mono" letter-spacing="0.5">=</text>
<text x="1080.5" y="517.5" font-size="12.5" font-weight="normal" fill="#000" text-anchor="end" font-family="Liberation Mono" letter-spacing="0.5">57680.00</text>
<text x="1088" y="517.5" font-size="12.5" font-family="Liberation Mono" letter-spacing="0.5" fill="#000">cm<tspan dy="-4.5" font-size="9" font-family="Liberation Sans" stroke="#000" stroke-width="0.3">4</tspan></text>
<text x="1154" y="517.5" font-size="12.5" font-family="Liberation Sans" fill="#000" stroke="#000" stroke-width="0.3">I<tspan dy="3" font-size="10.5">z</tspan></text>
<text x="1184" y="517.5" font-size="12.5" font-weight="normal" fill="#000" text-anchor="start" font-family="Liberation Mono" letter-spacing="0.5">=</text>
<text x="1265.5" y="517.5" font-size="12.5" font-weight="normal" fill="#000" text-anchor="end" font-family="Liberation Mono" letter-spacing="0.5">10820.00</text>
<text x="1273" y="517.5" font-size="12.5" font-family="Liberation Mono" letter-spacing="0.5" fill="#000">cm<tspan dy="-4.5" font-size="9" font-family="Liberation Sans" stroke="#000" stroke-width="0.3">4</tspan></text>
<text x="969" y="533.5" font-size="12.5" font-family="Liberation Sans" fill="#000" stroke="#000" stroke-width="0.3">i<tspan dy="3" font-size="10.5">y</tspan></text>
<text x="999" y="533.5" font-size="12.5" font-weight="normal" fill="#000" text-anchor="start" font-family="Liberation Mono" letter-spacing="0.5">=</text>
<text x="1080.5" y="533.5" font-size="12.5" font-weight="normal" fill="#000" text-anchor="end" font-family="Liberation Mono" letter-spacing="0.5">171.00</text>
<text x="1088" y="533.5" font-size="12.5" font-weight="normal" fill="#000" text-anchor="start" font-family="Liberation Mono" letter-spacing="0.5">mm</text>
<text x="1154" y="533.5" font-size="12.5" font-family="Liberation Sans" fill="#000" stroke="#000" stroke-width="0.3">i<tspan dy="3" font-size="10.5">z</tspan></text>
<text x="1184" y="533.5" font-size="12.5" font-weight="normal" fill="#000" text-anchor="start" font-family="Liberation Mono" letter-spacing="0.5">=</text>
<text x="1265.5" y="533.5" font-size="12.5" font-weight="normal" fill="#000" text-anchor="end" font-family="Liberation Mono" letter-spacing="0.5">74.00</text>
<text x="1273" y="533.5" font-size="12.5" font-weight="normal" fill="#000" text-anchor="start" font-family="Liberation Mono" letter-spacing="0.5">mm</text>
<text x="969" y="549.5" font-size="12.5" font-family="Liberation Sans" fill="#000" stroke="#000" stroke-width="0.3">W<tspan dy="3" font-size="10.5">y</tspan></text>
<text x="999" y="549.5" font-size="12.5" font-weight="normal" fill="#000" text-anchor="start" font-family="Liberation Mono" letter-spacing="0.5">=</text>
<text x="1080.5" y="549.5" font-size="12.5" font-weight="normal" fill="#000" text-anchor="end" font-family="Liberation Mono" letter-spacing="0.5">2880.00</text>
<text x="1088" y="549.5" font-size="12.5" font-family="Liberation Mono" letter-spacing="0.5" fill="#000">cm<tspan dy="-4.5" font-size="9" font-family="Liberation Sans" stroke="#000" stroke-width="0.3">3</tspan></text>
<text x="1154" y="549.5" font-size="12.5" font-family="Liberation Sans" fill="#000" stroke="#000" stroke-width="0.3">W<tspan dy="3" font-size="10.5">z</tspan></text>
<text x="1184" y="549.5" font-size="12.5" font-weight="normal" fill="#000" text-anchor="start" font-family="Liberation Mono" letter-spacing="0.5">=</text>
<text x="1265.5" y="549.5" font-size="12.5" font-weight="normal" fill="#000" text-anchor="end" font-family="Liberation Mono" letter-spacing="0.5">721.00</text>
<text x="1273" y="549.5" font-size="12.5" font-family="Liberation Mono" letter-spacing="0.5" fill="#000">cm<tspan dy="-4.5" font-size="9" font-family="Liberation Sans" stroke="#000" stroke-width="0.3">3</tspan></text>
<text x="969" y="565.5" font-size="12.5" font-family="Liberation Sans" fill="#000" stroke="#000" stroke-width="0.3">W<tspan dy="3" font-size="10.5">pl,y</tspan></text>
<text x="999" y="565.5" font-size="12.5" font-weight="normal" fill="#000" text-anchor="start" font-family="Liberation Mono" letter-spacing="0.5">=</text>
<text x="1080.5" y="565.5" font-size="12.5" font-weight="normal" fill="#000" text-anchor="end" font-family="Liberation Mono" letter-spacing="0.5">3232.00</text>
<text x="1088" y="565.5" font-size="12.5" font-family="Liberation Mono" letter-spacing="0.5" fill="#000">cm<tspan dy="-4.5" font-size="9" font-family="Liberation Sans" stroke="#000" stroke-width="0.3">3</tspan></text>
<text x="1154" y="565.5" font-size="12.5" font-family="Liberation Sans" fill="#000" stroke="#000" stroke-width="0.3">W<tspan dy="3" font-size="10.5">pl,z</tspan></text>
<text x="1184" y="565.5" font-size="12.5" font-weight="normal" fill="#000" text-anchor="start" font-family="Liberation Mono" letter-spacing="0.5">=</text>
<text x="1265.5" y="565.5" font-size="12.5" font-weight="normal" fill="#000" text-anchor="end" font-family="Liberation Mono" letter-spacing="0.5">1100.00</text>
<text x="1273" y="565.5" font-size="12.5" font-family="Liberation Mono" letter-spacing="0.5" fill="#000">cm<tspan dy="-4.5" font-size="9" font-family="Liberation Sans" stroke="#000" stroke-width="0.3">3</tspan></text>
<text x="969" y="596" font-size="11.7" font-weight="bold" fill="#6E7E78" text-anchor="start" font-family="Liberation Sans" >Torsions- und Wölbeigenschaften</text>
<text x="969" y="613.5" font-size="12.5" font-family="Liberation Sans" fill="#000" stroke="#000" stroke-width="0.3">I<tspan dy="3" font-size="10.5">T</tspan></text>
<text x="999" y="613.5" font-size="12.5" font-weight="normal" fill="#000" text-anchor="start" font-family="Liberation Mono" letter-spacing="0.5">=</text>
<text x="1080.5" y="613.5" font-size="12.5" font-weight="normal" fill="#000" text-anchor="end" font-family="Liberation Mono" letter-spacing="0.5">357.00</text>
<text x="1088" y="613.5" font-size="12.5" font-family="Liberation Mono" letter-spacing="0.5" fill="#000">cm<tspan dy="-4.5" font-size="9" font-family="Liberation Sans" stroke="#000" stroke-width="0.3">4</tspan></text>
<text x="1154" y="613.5" font-size="12.5" font-family="Liberation Sans" fill="#000" stroke="#000" stroke-width="0.3">I<tspan dy="3" font-size="10.5">W</tspan></text>
<text x="1175" y="613.5" font-size="12.5" font-weight="normal" fill="#000" text-anchor="start" font-family="Liberation Mono" letter-spacing="0.5">=</text>
<text x="1265.5" y="613.5" font-size="12.5" font-weight="normal" fill="#000" text-anchor="end" font-family="Liberation Mono" letter-spacing="0.5">3817000.0</text>
<text x="1273" y="613.5" font-size="12.5" font-weight="normal" fill="#000" text-anchor="start" font-family="Liberation Mono" letter-spacing="0.5">cm6</text>
<text x="969" y="644" font-size="11.7" font-weight="bold" fill="#6E7E78" text-anchor="start" font-family="Liberation Sans" >Rundungsradien und zugehörige Profilabmessungen</text>
<text x="969" y="661.5" font-size="12.5" font-family="Liberation Sans" fill="#000" stroke="#000" stroke-width="0.3">r</text>
<text x="999" y="661.5" font-size="12.5" font-weight="normal" fill="#000" text-anchor="start" font-family="Liberation Mono" letter-spacing="0.5">=</text>
<text x="1080.5" y="661.5" font-size="12.5" font-weight="normal" fill="#000" text-anchor="end" font-family="Liberation Mono" letter-spacing="0.5">27.00</text>
<text x="1088" y="661.5" font-size="12.5" font-weight="normal" fill="#000" text-anchor="start" font-family="Liberation Mono" letter-spacing="0.5">mm</text>
<text x="1154" y="661.5" font-size="12.5" font-family="Liberation Sans" fill="#000" stroke="#000" stroke-width="0.3">c</text>
<text x="1184" y="661.5" font-size="12.5" font-weight="normal" fill="#000" text-anchor="start" font-family="Liberation Mono" letter-spacing="0.5">=</text>
<text x="1265.5" y="661.5" font-size="12.5" font-weight="normal" fill="#000" text-anchor="end" font-family="Liberation Mono" letter-spacing="0.5">51.00</text>
<text x="1273" y="661.5" font-size="12.5" font-weight="normal" fill="#000" text-anchor="start" font-family="Liberation Mono" letter-spacing="0.5">mm</text>
</g>
</svg>
</body></html>
